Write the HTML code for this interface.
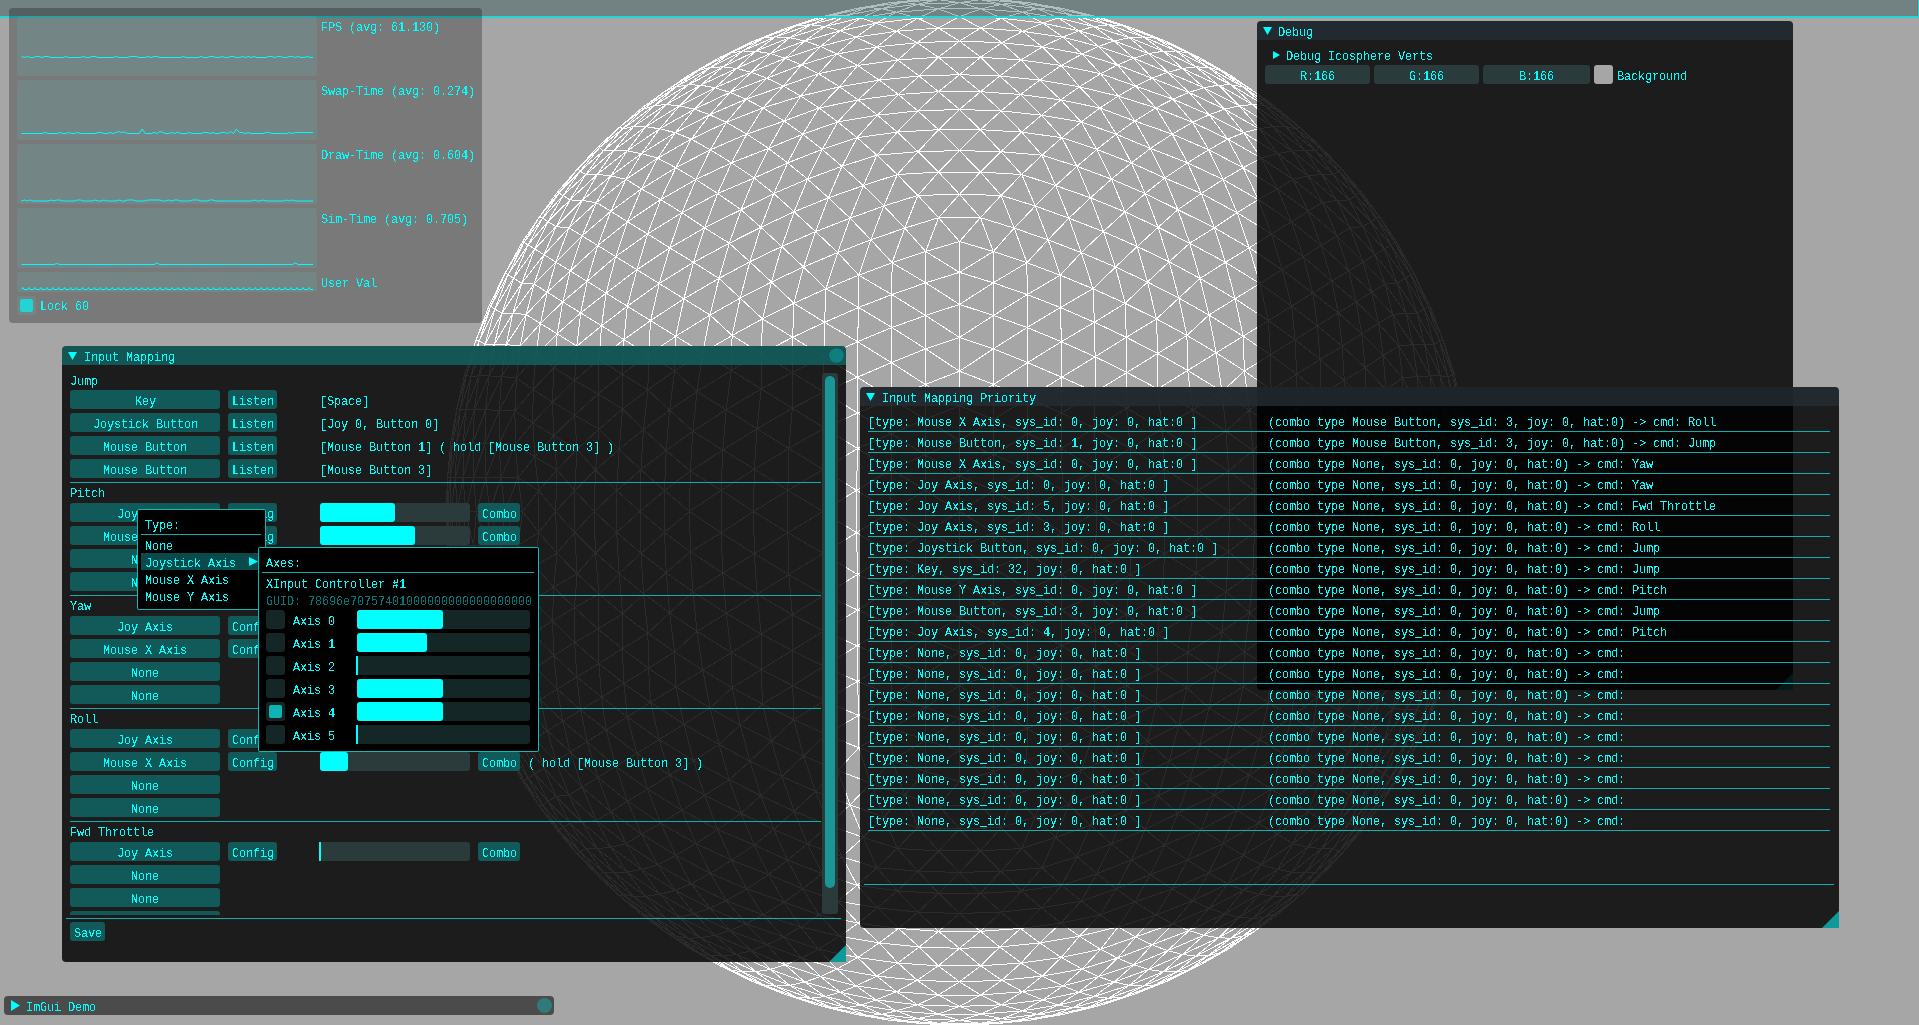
<!DOCTYPE html><html><head><meta charset="utf-8"><style>
html,body{margin:0;padding:0}body{width:1919px;height:1025px;overflow:hidden;background:#a6a6a6;position:relative;font-family:"Liberation Mono",monospace}
.t{position:absolute;filter:url(#th);font-size:12px;line-height:13px;letter-spacing:-0.2px;color:#00ffff;white-space:pre}
.r{position:absolute;display:block}
</style></head><body>
<svg width="0" height="0" style="position:absolute"><filter id="th"><feComponentTransfer><feFuncA type="discrete" tableValues="0 1"/></feComponentTransfer></filter></svg>
<svg class="r" style="left:0;top:0" width="1919" height="1025"><path d="M689.5 74.7L665.7 90.8M689.5 74.7L699.5 70M689.5 74.7L720.4 57.1M1229.5 74.7L1198.6 57.1M1229.5 74.7L1219.5 70M1229.5 74.7L1253.3 90.8M689.5 948.3L665.7 932.2M689.5 948.3L720.4 965.9M689.5 948.3L699.5 953M1229.5 948.3L1253.3 932.2M1229.5 948.3L1219.5 953M1229.5 948.3L1198.6 965.9M959.5 781.5L959.5 750.6M959.5 781.5L925.7 771.5M959.5 781.5L980.4 805.3M959.5 781.5L993.3 771.5M959.5 781.5L938.6 805.3M959.5 241.5L938.6 217.7M959.5 241.5L925.7 251.5M959.5 241.5L980.4 217.7M959.5 241.5L993.3 251.5M959.5 241.5L959.5 272.4M1396.3 511.5L1401 477.7M1396.3 511.5L1380.2 490.6M1396.3 511.5L1380.2 532.4M1396.3 511.5L1401 545.3M1396.3 511.5L1413.9 511.5M522.7 511.5L538.8 490.6M522.7 511.5L518 477.7M522.7 511.5L505.1 511.5M522.7 511.5L538.8 532.4M522.7 511.5L518 545.3M544.1 254.7L569 227.8M544.1 254.7L556 226.6M544.1 254.7L534.1 284.1M544.1 254.7L555.9 262.1M544.1 254.7L534.8 249M544.1 254.7L521.7 283.3M702.8 352.8L675.8 336.2M702.8 352.8L674.6 371M702.8 352.8L732.1 335.4M702.8 352.8L710.1 315M702.8 352.8L731.3 370.4M702.8 352.8L697 391.6M800.8 96.1L783.4 86.1M800.8 96.1L763 107.9M800.8 96.1L784.2 121M800.8 96.1L819 108M800.8 96.1L818.4 73.7M800.8 96.1L839.6 86.8M1118.2 96.1L1079.4 86.8M1118.2 96.1L1100 108M1118.2 96.1L1135.6 86.1M1118.2 96.1L1100.6 73.7M1118.2 96.1L1156 107.9M1118.2 96.1L1134.8 121M959.5 -2L924 -0.8M959.5 -2L938.3 -0.4M959.5 -2L980.7 -0.4M959.5 -2L995 -0.8M446 511.5L447.2 511.5M446 511.5L447.6 477.2M446 511.5L447.6 545.8M1216.2 352.8L1208.9 315M1216.2 352.8L1186.9 335.4M1216.2 352.8L1244.4 371M1216.2 352.8L1243.2 336.2M1216.2 352.8L1222 391.6M1216.2 352.8L1187.7 370.4M1374.9 254.7L1363 226.6M1374.9 254.7L1350 227.8M1374.9 254.7L1363.1 262.1M1374.9 254.7L1384.9 284.1M1374.9 254.7L1397.3 283.3M1374.9 254.7L1384.2 249M702.8 670.2L697 631.4M702.8 670.2L674.6 652M702.8 670.2L732.1 687.6M702.8 670.2L731.3 652.6M702.8 670.2L710.1 708M702.8 670.2L675.8 686.8M959.5 511.5L959.5 476M959.5 511.5L925.2 490.3M959.5 511.5L925.2 532.7M959.5 511.5L959.5 547M959.5 511.5L993.8 532.7M959.5 511.5L993.8 490.3M544.1 768.2L534.1 738.9M544.1 768.2L521.7 739.7M544.1 768.2L534.8 774M544.1 768.2L556 796.4M544.1 768.2L569 795.2M544.1 768.2L555.9 760.9M1374.9 768.2L1350 795.2M1374.9 768.2L1363 796.4M1374.9 768.2L1384.9 738.9M1374.9 768.2L1363.1 760.9M1374.9 768.2L1384.2 774M1374.9 768.2L1397.3 739.7M1216.2 670.2L1243.2 686.8M1216.2 670.2L1244.4 652M1216.2 670.2L1186.9 687.6M1216.2 670.2L1208.9 708M1216.2 670.2L1187.7 652.6M1216.2 670.2L1222 631.4M1118.2 926.9L1135.6 936.9M1118.2 926.9L1156 915.1M1118.2 926.9L1134.8 902M1118.2 926.9L1100 915M1118.2 926.9L1100.6 949.3M1118.2 926.9L1079.4 936.2M800.8 926.9L839.6 936.2M800.8 926.9L819 915M800.8 926.9L783.4 936.9M800.8 926.9L818.4 949.3M800.8 926.9L763 915.1M800.8 926.9L784.2 902M959.5 1025L995 1023.8M959.5 1025L980.7 1023.4M959.5 1025L938.3 1023.4M959.5 1025L924 1023.8M1473 511.5L1471.8 511.5M1473 511.5L1471.4 545.8M1473 511.5L1471.4 477.2M603.2 151L633.6 126.5M603.2 151L622.5 129.1M603.2 151L585.7 174.6M603.2 151L614.3 150M603.2 151L599.7 147.4M603.2 151L580.1 171.1M657.7 158.1L641.5 153.6M657.7 158.1L626 179.3M657.7 158.1L691.2 139.1M657.7 158.1L675.3 132.7M657.7 158.1L641.5 188.9M657.7 158.1L675.8 167.7M736.7 68.5L723.2 66.9M736.7 68.5L700.6 85.1M736.7 68.5L715 87.8M736.7 68.5L751.3 72.3M736.7 68.5L755.5 51.2M736.7 68.5L770.3 53.6M599 429L574.5 415.3M599 429L577.1 449.3M599 429L622.6 409.1M599 429L598 394M599 429L595.4 470.1M599 429L619.1 449.3M606.1 293.1L601.6 325.8M606.1 293.1L627.3 306.2M606.1 293.1L587.1 281.3M606.1 293.1L580.7 312.9M606.1 293.1L615.7 256.6M606.1 293.1L636.9 269.7M516.5 378L514.9 410.8M516.5 378L533.1 389.7M516.5 378L535.8 355.5M516.5 378L520.3 345.9M516.5 378L499.2 410.6M516.5 378L501.6 376.6M877 155.2L863.3 185.6M877 155.2L897.3 174.5M877 155.2L857.1 137.7M877 155.2L842 166.3M877 155.2L918.1 151.7M877 155.2L897.3 132.1M741.1 209.7L773.8 193.5M741.1 209.7L754.2 178M741.1 209.7L729.3 243.2M741.1 209.7L760.9 227.3M741.1 209.7L704.6 227.8M741.1 209.7L717.7 193.5M826 288.7L858.8 275.2M826 288.7L837.7 252.6M826 288.7L803.5 267M826 288.7L793.9 303.3M826 288.7L858.6 307.5M826 288.7L824.6 322.3M876.1 23.1L840.1 30.8M876.1 23.1L856.2 37.1M876.1 23.1L896.5 12.2M876.1 23.1L861 17.9M876.1 23.1L896.4 31.3M876.1 23.1L917.6 18.2M819.2 17.5L785.4 28.4M819.2 17.5L796.8 25.6M819.2 17.5L832.5 15.1M819.2 17.5L853.7 9M1042 155.2L1000.9 151.7M1042 155.2L1021.7 174.5M1042 155.2L1061.9 137.7M1042 155.2L1021.7 132.1M1042 155.2L1055.7 185.6M1042 155.2L1077 166.3M959.5 74.7L980.4 91.7M959.5 74.7L999.8 76M959.5 74.7L919.2 76M959.5 74.7L938.6 91.7M959.5 74.7L938.3 57.2M959.5 74.7L980.7 57.2M1099.8 17.5L1122.2 25.6M1099.8 17.5L1133.6 28.4M1099.8 17.5L1065.3 9M1099.8 17.5L1086.5 15.1M1042.9 23.1L1058 17.9M1042.9 23.1L1022.5 12.2M1042.9 23.1L1062.8 37.1M1042.9 23.1L1078.9 30.8M1042.9 23.1L1022.6 31.3M1042.9 23.1L1001.4 18.2M1182.3 68.5L1195.8 66.9M1182.3 68.5L1163.5 51.2M1182.3 68.5L1148.7 53.6M1182.3 68.5L1167.7 72.3M1182.3 68.5L1218.4 85.1M1182.3 68.5L1204 87.8M522.7 241.5L524 242.4M522.7 241.5L539.7 216.5M522.7 241.5L505.2 273.1M471.1 376.5L478.8 375.9M471.1 376.5L485.1 344.3M471.1 376.5L460.2 409.5M471.1 376.5L465.9 409.7M471.1 376.5L466.2 375.2M471.1 376.5L479.3 340.8M465.5 511.5L476.4 511.5M465.5 511.5L473.6 477.6M465.5 511.5L463.1 477.3M465.5 511.5L457 511.5M465.5 511.5L473.6 545.4M465.5 511.5L463.1 545.7M1261.3 158.1L1243.7 132.7M1261.3 158.1L1227.8 139.1M1261.3 158.1L1293 179.3M1261.3 158.1L1277.5 153.6M1261.3 158.1L1243.2 167.7M1261.3 158.1L1277.5 188.9M1315.8 151L1296.5 129.1M1315.8 151L1285.4 126.5M1315.8 151L1304.7 150M1315.8 151L1333.3 174.6M1315.8 151L1319.3 147.4M1315.8 151L1338.9 171.1M1093 288.7L1081.3 252.6M1093 288.7L1060.2 275.2M1093 288.7L1125.1 303.3M1093 288.7L1115.5 267M1093 288.7L1060.4 307.5M1093 288.7L1094.4 322.3M1177.9 209.7L1158.1 227.3M1177.9 209.7L1189.7 243.2M1177.9 209.7L1164.8 178M1177.9 209.7L1145.2 193.5M1177.9 209.7L1201.3 193.5M1177.9 209.7L1214.4 227.8M1402.5 378L1385.9 389.7M1402.5 378L1404.1 410.8M1402.5 378L1398.7 345.9M1402.5 378L1383.2 355.5M1402.5 378L1419.8 410.6M1402.5 378L1417.4 376.6M1312.9 293.1L1338.3 312.9M1312.9 293.1L1331.9 281.3M1312.9 293.1L1291.7 306.2M1312.9 293.1L1317.4 325.8M1312.9 293.1L1282.1 269.7M1312.9 293.1L1303.3 256.6M1320 429L1341.9 449.3M1320 429L1344.5 415.3M1320 429L1321 394M1320 429L1296.4 409.1M1320 429L1323.6 470.1M1320 429L1299.9 449.3M824.5 428.1L823.9 392.1M824.5 428.1L792.3 408.2M824.5 428.1L857.5 448.5M824.5 428.1L857.7 413M824.5 428.1L788.8 448.4M824.5 428.1L823.2 469.6M959.5 371.2L959.5 337.4M959.5 371.2L925.6 348.8M959.5 371.2L925.3 384.5M959.5 371.2L959.5 405.7M959.5 371.2L993.4 348.8M959.5 371.2L993.7 384.5M599 594L595.4 552.9M599 594L577.1 573.7M599 594L622.6 613.9M599 594L619.1 573.7M599 594L574.5 607.7M599 594L598 629M689.5 511.5L664.5 532.4M689.5 511.5L690.4 551.8M689.5 511.5L690.4 471.2M689.5 511.5L664.5 490.6M689.5 511.5L721.1 490.3M689.5 511.5L721.1 532.7M959.5 651.8L925.6 674.2M959.5 651.8L959.5 685.6M959.5 651.8L959.5 617.3M959.5 651.8L925.3 638.5M959.5 651.8L993.4 674.2M959.5 651.8L993.7 638.5M824.5 594.9L857.7 610M824.5 594.9L857.5 574.5M824.5 594.9L792.3 614.8M824.5 594.9L823.9 630.9M824.5 594.9L788.8 574.6M824.5 594.9L823.2 553.4M826 734.3L858.8 747.8M826 734.3L858.6 715.5M826 734.3L824.6 700.7M826 734.3L793.9 719.7M826 734.3L837.7 770.4M826 734.3L803.5 756M471.1 646.5L465.9 613.3M471.1 646.5L460.2 613.5M471.1 646.5L485.1 678.7M471.1 646.5L478.8 647.1M471.1 646.5L466.2 647.8M471.1 646.5L479.3 682.2M516.5 645L514.9 612.2M516.5 645L499.2 612.4M516.5 645L501.6 646.4M516.5 645L520.3 677.1M516.5 645L533.1 633.3M516.5 645L535.8 667.5M603.2 872L599.7 875.6M603.2 872L622.5 893.9M603.2 872L585.7 848.4M603.2 872L580.1 851.9M603.2 872L633.6 896.5M603.2 872L614.3 873M522.7 781.5L539.7 806.5M522.7 781.5L524 780.6M522.7 781.5L505.2 749.9M1315.8 872L1285.4 896.5M1315.8 872L1296.5 893.9M1315.8 872L1333.3 848.4M1315.8 872L1304.7 873M1315.8 872L1319.3 875.6M1315.8 872L1338.9 851.9M1261.3 864.9L1277.5 869.4M1261.3 864.9L1293 843.7M1261.3 864.9L1227.8 883.9M1261.3 864.9L1243.7 890.3M1261.3 864.9L1277.5 834.1M1261.3 864.9L1243.2 855.3M1182.3 954.5L1195.8 956.1M1182.3 954.5L1218.4 937.9M1182.3 954.5L1204 935.2M1182.3 954.5L1167.7 950.7M1182.3 954.5L1163.5 971.8M1182.3 954.5L1148.7 969.4M1320 594L1344.5 607.7M1320 594L1341.9 573.7M1320 594L1296.4 613.9M1320 594L1321 629M1320 594L1323.6 552.9M1320 594L1299.9 573.7M1312.9 729.9L1317.4 697.2M1312.9 729.9L1291.7 716.8M1312.9 729.9L1331.9 741.7M1312.9 729.9L1338.3 710.1M1312.9 729.9L1303.3 766.4M1312.9 729.9L1282.1 753.3M1402.5 645L1404.1 612.2M1402.5 645L1385.9 633.3M1402.5 645L1383.2 667.5M1402.5 645L1398.7 677.1M1402.5 645L1419.8 612.4M1402.5 645L1417.4 646.4M1042 867.8L1055.7 837.4M1042 867.8L1021.7 848.5M1042 867.8L1061.9 885.3M1042 867.8L1077 856.7M1042 867.8L1000.9 871.3M1042 867.8L1021.7 890.9M1177.9 813.3L1145.2 829.5M1177.9 813.3L1164.8 845M1177.9 813.3L1189.7 779.8M1177.9 813.3L1158.1 795.7M1177.9 813.3L1214.4 795.2M1177.9 813.3L1201.3 829.5M1093 734.3L1060.2 747.8M1093 734.3L1081.3 770.4M1093 734.3L1115.5 756M1093 734.3L1125.1 719.7M1093 734.3L1060.4 715.5M1093 734.3L1094.4 700.7M1042.9 999.9L1078.9 992.2M1042.9 999.9L1062.8 985.9M1042.9 999.9L1022.5 1010.8M1042.9 999.9L1058 1005.1M1042.9 999.9L1022.6 991.7M1042.9 999.9L1001.4 1004.8M1099.8 1005.5L1133.6 994.6M1099.8 1005.5L1122.2 997.4M1099.8 1005.5L1086.5 1007.9M1099.8 1005.5L1065.3 1014M877 867.8L918.1 871.3M877 867.8L897.3 848.5M877 867.8L857.1 885.3M877 867.8L897.3 890.9M877 867.8L863.3 837.4M877 867.8L842 856.7M959.5 948.3L938.6 931.3M959.5 948.3L919.2 947M959.5 948.3L999.8 947M959.5 948.3L980.4 931.3M959.5 948.3L980.7 965.8M959.5 948.3L938.3 965.8M819.2 1005.5L796.8 997.4M819.2 1005.5L785.4 994.6M819.2 1005.5L853.7 1014M819.2 1005.5L832.5 1007.9M876.1 999.9L861 1005.1M876.1 999.9L896.5 1010.8M876.1 999.9L856.2 985.9M876.1 999.9L840.1 992.2M876.1 999.9L896.4 991.7M876.1 999.9L917.6 1004.8M736.7 954.5L723.2 956.1M736.7 954.5L755.5 971.8M736.7 954.5L770.3 969.4M736.7 954.5L751.3 950.7M736.7 954.5L700.6 937.9M736.7 954.5L715 935.2M1396.3 781.5L1395 780.6M1396.3 781.5L1379.3 806.5M1396.3 781.5L1413.8 749.9M1447.9 646.5L1440.2 647.1M1447.9 646.5L1433.9 678.7M1447.9 646.5L1458.8 613.5M1447.9 646.5L1453.1 613.3M1447.9 646.5L1452.8 647.8M1447.9 646.5L1439.7 682.2M1453.5 511.5L1442.6 511.5M1453.5 511.5L1445.4 545.4M1453.5 511.5L1455.9 545.7M1453.5 511.5L1462 511.5M1453.5 511.5L1445.4 477.6M1453.5 511.5L1455.9 477.3M1094.5 594.9L1095.1 630.9M1094.5 594.9L1126.7 614.8M1094.5 594.9L1061.5 574.5M1094.5 594.9L1061.3 610M1094.5 594.9L1130.2 574.6M1094.5 594.9L1095.8 553.4M1229.5 511.5L1254.5 490.6M1229.5 511.5L1228.6 471.2M1229.5 511.5L1228.6 551.8M1229.5 511.5L1254.5 532.4M1229.5 511.5L1197.9 532.7M1229.5 511.5L1197.9 490.3M1094.5 428.1L1061.3 413M1094.5 428.1L1061.5 448.5M1094.5 428.1L1126.7 408.2M1094.5 428.1L1095.1 392.1M1094.5 428.1L1130.2 448.4M1094.5 428.1L1095.8 469.6M657.7 864.9L675.3 890.3M657.7 864.9L691.2 883.9M657.7 864.9L626 843.7M657.7 864.9L641.5 869.4M657.7 864.9L675.8 855.3M657.7 864.9L641.5 834.1M741.1 813.3L760.9 795.7M741.1 813.3L729.3 779.8M741.1 813.3L754.2 845M741.1 813.3L773.8 829.5M741.1 813.3L717.7 829.5M741.1 813.3L704.6 795.2M606.1 729.9L580.7 710.1M606.1 729.9L587.1 741.7M606.1 729.9L627.3 716.8M606.1 729.9L601.6 697.2M606.1 729.9L636.9 753.3M606.1 729.9L615.7 766.4M1447.9 376.5L1453.1 409.7M1447.9 376.5L1458.8 409.5M1447.9 376.5L1433.9 344.3M1447.9 376.5L1440.2 375.9M1447.9 376.5L1452.8 375.2M1447.9 376.5L1439.7 340.8M1396.3 241.5L1379.3 216.5M1396.3 241.5L1395 242.4M1396.3 241.5L1413.8 273.1M643.4 109L665.7 90.8M643.4 109L676.1 86.8M643.4 109L654 105.7M643.4 109L622.5 129.1M643.4 109L642.3 107.7M643.4 109L620.1 126.7M666.2 104.5L633.6 126.5M666.2 104.5L654 105.7M666.2 104.5L687.8 84.9M666.2 104.5L700.6 85.1M666.2 104.5L645.8 126.7M666.2 104.5L679.6 105.8M710.7 67.4L676.1 86.8M710.7 67.4L699.5 70M710.7 67.4L723.2 66.9M710.7 67.4L687.8 84.9M710.7 67.4L730.8 53M710.7 67.4L742.6 51M596.4 202.6L569 227.8M596.4 202.6L582.2 200.5M596.4 202.6L610.9 175.9M596.4 202.6L626 179.3M596.4 202.6L582.1 235.9M596.4 202.6L610.8 211.2M627.1 150.9L641.5 153.6M627.1 150.9L610.9 175.9M627.1 150.9L597.4 174.3M627.1 150.9L614.3 150M627.1 150.9L645.8 126.7M627.1 150.9L659.8 128.8M569.9 199.9L582.2 200.5M569.9 199.9L556 226.6M569.9 199.9L585.7 174.6M569.9 199.9L597.4 174.3M569.9 199.9L547.9 221.6M569.9 199.9L563.2 195.5M766.9 78.2L783.4 86.1M766.9 78.2L746.1 99.2M766.9 78.2L730 92.4M766.9 78.2L751.3 72.3M766.9 78.2L801.5 64.9M766.9 78.2L785.3 58.2M694.5 109.2L715 87.8M694.5 109.2L730 92.4M694.5 109.2L709.8 114.8M694.5 109.2L675.3 132.7M694.5 109.2L659.8 128.8M694.5 109.2L679.6 105.8M726.4 122.3L746.1 99.2M726.4 122.3L763 107.9M726.4 122.3L691.2 139.1M726.4 122.3L709.8 114.8M726.4 122.3L746.8 134.1M726.4 122.3L710.3 149.8M557 469.9L538.8 490.6M557 469.9L534.8 456.8M557 469.9L553.7 435.8M557 469.9L577.1 449.3M557 469.9L555.7 511.5M557 469.9L574.7 490.6M552.5 402.1L574.5 415.3M552.5 402.1L553.7 435.8M552.5 402.1L532.9 422.9M552.5 402.1L533.1 389.7M552.5 402.1L574.7 380.5M552.5 402.1L553.8 367.6M515.4 444.1L534.8 456.8M515.4 444.1L518 477.7M515.4 444.1L514.9 410.8M515.4 444.1L532.9 422.9M515.4 444.1L501 477.7M515.4 444.1L499 443.8M650.6 320.6L675.8 336.2M650.6 320.6L648.5 354.8M650.6 320.6L623.9 339.6M650.6 320.6L627.3 306.2M650.6 320.6L683.9 298.8M650.6 320.6L659.2 283.5M598.9 359.5L601.6 325.8M598.9 359.5L623.9 339.6M598.9 359.5L622.3 374.2M598.9 359.5L598 394M598.9 359.5L574.7 380.5M598.9 359.5L576.8 346.1M647.9 389.8L648.5 354.8M647.9 389.8L674.6 371M647.9 389.8L622.6 409.1M647.9 389.8L622.3 374.2M647.9 389.8L669.6 410.2M647.9 389.8L643.5 429.5M526.2 314.5L534.1 284.1M526.2 314.5L547.2 292.2M526.2 314.5L540.4 323.5M526.2 314.5L520.3 345.9M526.2 314.5L512.9 313.3M526.2 314.5L506.2 344.7M557.2 333.8L535.8 355.5M557.2 333.8L540.4 323.5M557.2 333.8L562.8 301.8M557.2 333.8L580.7 312.9M557.2 333.8L576.8 346.1M557.2 333.8L553.8 367.6M570.3 271L547.2 292.2M570.3 271L555.9 262.1M570.3 271L587.1 281.3M570.3 271L562.8 301.8M570.3 271L582.1 235.9M570.3 271L597.8 245.5M917.9 195.4L938.6 217.7M917.9 195.4L904.8 228.1M917.9 195.4L883.8 206M917.9 195.4L897.3 174.5M917.9 195.4L959.5 194.3M917.9 195.4L938.6 172.1M850.1 218.2L863.3 185.6M850.1 218.2L883.8 206M850.1 218.2L870.9 239.8M850.1 218.2L837.7 252.6M850.1 218.2L828.5 197.8M850.1 218.2L815.6 231.6M892.1 262.7L904.8 228.1M892.1 262.7L925.7 251.5M892.1 262.7L858.8 275.2M892.1 262.7L870.9 239.8M892.1 262.7L925.7 282.8M892.1 262.7L891.8 294.6M768.6 148.4L784.2 121M768.6 148.4L802.8 134.2M768.6 148.4L787.6 162.9M768.6 148.4L754.2 178M768.6 148.4L746.8 134.1M768.6 148.4L731.5 162.8M807.5 179.1L773.8 193.5M807.5 179.1L787.6 162.9M807.5 179.1L822.2 149.4M807.5 179.1L842 166.3M807.5 179.1L828.5 197.8M807.5 179.1L794.1 211.8M837.8 121.9L802.8 134.2M837.8 121.9L819 108M837.8 121.9L857.1 137.7M837.8 121.9L822.2 149.4M837.8 121.9L858.2 99.9M837.8 121.9L877.5 115.2M762.5 318.9L732.1 335.4M762.5 318.9L740.2 298.1M762.5 318.9L771.5 282M762.5 318.9L793.9 303.3M762.5 318.9L761.3 353.5M762.5 318.9L792.7 337.3M781.8 246.5L803.5 267M781.8 246.5L771.5 282M781.8 246.5L749.8 261.8M781.8 246.5L760.9 227.3M781.8 246.5L794.1 211.8M781.8 246.5L815.6 231.6M719 278.4L740.2 298.1M719 278.4L710.1 315M719 278.4L729.3 243.2M719 278.4L749.8 261.8M719 278.4L683.9 298.8M719 278.4L693.5 262.3M627.5 221.8L615.7 256.6M627.5 221.8L597.8 245.5M627.5 221.8L610.8 211.2M627.5 221.8L641.5 188.9M627.5 221.8L647.6 233.9M627.5 221.8L660.7 199.6M669.8 247.9L704.6 227.8M669.8 247.9L693.5 262.3M669.8 247.9L659.2 283.5M669.8 247.9L636.9 269.7M669.8 247.9L647.6 233.9M669.8 247.9L681.9 212.7M695.9 179.5L675.8 167.7M695.9 179.5L710.3 149.8M695.9 179.5L731.5 162.8M695.9 179.5L717.7 193.5M695.9 179.5L681.9 212.7M695.9 179.5L660.7 199.6M775.5 36.9L755.5 51.2M775.5 36.9L742.6 51M775.5 36.9L763.5 38.1M775.5 36.9L796.8 25.6M775.5 36.9L789.7 37.7M775.5 36.9L810.6 24.8M752.4 41.6L730.8 53M752.4 41.6L720.4 57.1M752.4 41.6L785.4 28.4M752.4 41.6L763.5 38.1M836.9 54L818.4 73.7M836.9 54L801.5 64.9M836.9 54L820.5 46.4M836.9 54L856.2 37.1M836.9 54L857.7 65.5M836.9 54L876.8 46.9M804.8 41L840.1 30.8M804.8 41L820.5 46.4M804.8 41L785.3 58.2M804.8 41L770.3 53.6M804.8 41L789.7 37.7M804.8 41L825.2 26.5M888.7 2.9L924 -0.8M888.7 2.9L902.8 2.3M888.7 2.9L867.3 7.5M888.7 2.9L853.7 9M846.5 15.3L832.5 15.1M846.5 15.3L867.3 7.5M846.5 15.3L881.7 8.6M846.5 15.3L861 17.9M846.5 15.3L825.2 26.5M846.5 15.3L810.6 24.8M917.3 4.3L902.8 2.3M917.3 4.3L938.3 -0.4M917.3 4.3L896.5 12.2M917.3 4.3L881.7 8.6M917.3 4.3L959.5 2.6M917.3 4.3L938.3 8.9M1001.1 195.4L980.4 217.7M1001.1 195.4L959.5 194.3M1001.1 195.4L980.4 172.1M1001.1 195.4L1021.7 174.5M1001.1 195.4L1014.2 228.1M1001.1 195.4L1035.2 206M959.5 150.6L1000.9 151.7M959.5 150.6L980.4 172.1M959.5 150.6L938.6 172.1M959.5 150.6L918.1 151.7M959.5 150.6L980.4 129.7M959.5 150.6L938.6 129.7M1039.8 80.1L1079.4 86.8M1039.8 80.1L1060.8 99.9M1039.8 80.1L1020.6 94.5M1039.8 80.1L999.8 76M1039.8 80.1L1061.3 65.5M1039.8 80.1L1021 60M1001.2 110.9L980.4 91.7M1001.2 110.9L1020.6 94.5M1001.2 110.9L1041.5 115.2M1001.2 110.9L1021.7 132.1M1001.2 110.9L980.4 129.7M1001.2 110.9L959.5 109.5M1081.2 121.9L1060.8 99.9M1081.2 121.9L1100 108M1081.2 121.9L1061.9 137.7M1081.2 121.9L1041.5 115.2M1081.2 121.9L1116.2 134.2M1081.2 121.9L1096.8 149.4M917.8 110.9L897.3 132.1M917.8 110.9L877.5 115.2M917.8 110.9L898.4 94.5M917.8 110.9L938.6 91.7M917.8 110.9L959.5 109.5M917.8 110.9L938.6 129.7M879.2 80.1L858.2 99.9M879.2 80.1L839.6 86.8M879.2 80.1L919.2 76M879.2 80.1L898.4 94.5M879.2 80.1L857.7 65.5M879.2 80.1L898 60M1166.6 41.6L1198.6 57.1M1166.6 41.6L1188.2 53M1166.6 41.6L1155.5 38.1M1166.6 41.6L1133.6 28.4M1143.5 36.9L1122.2 25.6M1143.5 36.9L1155.5 38.1M1143.5 36.9L1176.4 51M1143.5 36.9L1163.5 51.2M1143.5 36.9L1108.4 24.8M1143.5 36.9L1129.3 37.7M1208.3 67.4L1188.2 53M1208.3 67.4L1219.5 70M1208.3 67.4L1195.8 66.9M1208.3 67.4L1176.4 51M1208.3 67.4L1242.9 86.8M1208.3 67.4L1231.2 84.9M1001.7 4.3L980.7 -0.4M1001.7 4.3L1016.2 2.3M1001.7 4.3L1037.3 8.6M1001.7 4.3L1022.5 12.2M1001.7 4.3L959.5 2.6M1001.7 4.3L980.7 8.9M1072.5 15.3L1058 17.9M1072.5 15.3L1037.3 8.6M1072.5 15.3L1051.7 7.5M1072.5 15.3L1086.5 15.1M1072.5 15.3L1108.4 24.8M1072.5 15.3L1093.8 26.5M1030.3 2.9L1016.2 2.3M1030.3 2.9L995 -0.8M1030.3 2.9L1065.3 9M1030.3 2.9L1051.7 7.5M1152.1 78.2L1135.6 86.1M1152.1 78.2L1117.5 64.9M1152.1 78.2L1133.7 58.2M1152.1 78.2L1167.7 72.3M1152.1 78.2L1172.9 99.2M1152.1 78.2L1189 92.4M1114.2 41L1148.7 53.6M1114.2 41L1133.7 58.2M1114.2 41L1098.5 46.4M1114.2 41L1078.9 30.8M1114.2 41L1093.8 26.5M1114.2 41L1129.3 37.7M1082.1 54L1117.5 64.9M1082.1 54L1100.6 73.7M1082.1 54L1062.8 37.1M1082.1 54L1098.5 46.4M1082.1 54L1061.3 65.5M1082.1 54L1042.2 46.9M917.2 42.7L938.3 57.2M917.2 42.7L898 60M917.2 42.7L876.8 46.9M917.2 42.7L896.4 31.3M917.2 42.7L959.5 41.1M917.2 42.7L938.3 28M1001.8 42.7L1022.6 31.3M1001.8 42.7L1042.2 46.9M1001.8 42.7L1021 60M1001.8 42.7L980.7 57.2M1001.8 42.7L959.5 41.1M1001.8 42.7L980.7 28M959.5 16.6L917.6 18.2M959.5 16.6L938.3 8.9M959.5 16.6L980.7 8.9M959.5 16.6L1001.4 18.2M959.5 16.6L980.7 28M959.5 16.6L938.3 28M598.6 146.3L620.1 126.7M598.6 146.3L599.7 147.4M598.6 146.3L577.7 168.7M558.9 193L580.1 171.1M558.9 193L563.2 195.5M558.9 193L542.5 218.2M558.9 193L539.7 216.5M558.9 193L557.5 192M558.9 193L577.7 168.7M528.1 244.9L547.9 221.6M528.1 244.9L534.8 249M528.1 244.9L524 242.4M528.1 244.9L542.5 218.2M528.1 244.9L513.5 278.2M528.1 244.9L508 274.8M484.9 443.9L499.2 410.6M484.9 443.9L499 443.8M484.9 443.9L486.1 477.6M484.9 443.9L473.6 477.6M484.9 443.9L485.7 409.6M484.9 443.9L472.8 443.4M489.6 511.5L501 477.7M489.6 511.5L505.1 511.5M489.6 511.5L476.4 511.5M489.6 511.5L486.1 477.6M489.6 511.5L501 545.3M489.6 511.5L486.1 545.4M502 313.2L521.7 283.3M502 313.2L512.9 313.3M502 313.2L494.4 344.1M502 313.2L485.1 344.3M502 313.2L513.5 278.2M502 313.2L494.9 309.1M489 375.9L478.8 375.9M489 375.9L494.4 344.1M489 375.9L506.2 344.7M489 375.9L501.6 376.6M489 375.9L485.7 409.6M489 375.9L474.5 409.3M450.9 511.5L447.2 511.5M450.9 511.5L450.3 477.2M450.9 511.5L455.5 477.3M450.9 511.5L457 511.5M450.9 511.5L450.3 545.8M450.9 511.5L455.5 545.7M463.3 443.3L463.1 477.3M463.3 443.3L455.5 477.3M463.3 443.3L456.6 443.1M463.3 443.3L465.9 409.7M463.3 443.3L474.5 409.3M463.3 443.3L472.8 443.4M452.3 443.2L450.3 477.2M452.3 443.2L447.6 477.2M452.3 443.2L460.2 409.5M452.3 443.2L456.6 443.1M452.3 443.2L450.6 442.9M452.3 443.2L456.9 408.6M464.6 374.7L466.2 375.2M464.6 374.7L456.9 408.6M464.6 374.7L476 339.9M490.7 306.3L505.2 273.1M490.7 306.3L508 274.8M490.7 306.3L494.9 309.1M490.7 306.3L479.3 340.8M490.7 306.3L476 339.9M490.7 306.3L489.1 305.6M1252.8 104.5L1218.4 85.1M1252.8 104.5L1231.2 84.9M1252.8 104.5L1265 105.7M1252.8 104.5L1285.4 126.5M1252.8 104.5L1239.4 105.8M1252.8 104.5L1273.2 126.7M1275.6 109L1242.9 86.8M1275.6 109L1253.3 90.8M1275.6 109L1296.5 129.1M1275.6 109L1265 105.7M1275.6 109L1276.7 107.7M1275.6 109L1298.9 126.7M1192.6 122.3L1156 107.9M1192.6 122.3L1172.9 99.2M1192.6 122.3L1209.2 114.8M1192.6 122.3L1227.8 139.1M1192.6 122.3L1172.2 134.1M1192.6 122.3L1208.7 149.8M1224.5 109.2L1243.7 132.7M1224.5 109.2L1209.2 114.8M1224.5 109.2L1189 92.4M1224.5 109.2L1204 87.8M1224.5 109.2L1239.4 105.8M1224.5 109.2L1259.2 128.8M1349.1 199.9L1363 226.6M1349.1 199.9L1336.8 200.5M1349.1 199.9L1321.6 174.3M1349.1 199.9L1333.3 174.6M1349.1 199.9L1371.1 221.6M1349.1 199.9L1355.8 195.5M1291.9 150.9L1304.7 150M1291.9 150.9L1321.6 174.3M1291.9 150.9L1308.1 175.9M1291.9 150.9L1277.5 153.6M1291.9 150.9L1259.2 128.8M1291.9 150.9L1273.2 126.7M1322.6 202.6L1336.8 200.5M1322.6 202.6L1350 227.8M1322.6 202.6L1293 179.3M1322.6 202.6L1308.1 175.9M1322.6 202.6L1336.9 235.9M1322.6 202.6L1308.2 211.2M1026.9 262.7L993.3 251.5M1026.9 262.7L1014.2 228.1M1026.9 262.7L1048.1 239.8M1026.9 262.7L1060.2 275.2M1026.9 262.7L993.3 282.8M1026.9 262.7L1027.2 294.6M1068.9 218.2L1081.3 252.6M1068.9 218.2L1048.1 239.8M1068.9 218.2L1035.2 206M1068.9 218.2L1055.7 185.6M1068.9 218.2L1103.4 231.6M1068.9 218.2L1090.5 197.8M1200 278.4L1208.9 315M1200 278.4L1178.8 298.1M1200 278.4L1169.2 261.8M1200 278.4L1189.7 243.2M1200 278.4L1235.1 298.8M1200 278.4L1225.5 262.3M1137.2 246.5L1158.1 227.3M1137.2 246.5L1169.2 261.8M1137.2 246.5L1147.5 282M1137.2 246.5L1115.5 267M1137.2 246.5L1103.4 231.6M1137.2 246.5L1124.9 211.8M1156.5 318.9L1178.8 298.1M1156.5 318.9L1186.9 335.4M1156.5 318.9L1125.1 303.3M1156.5 318.9L1147.5 282M1156.5 318.9L1157.7 353.5M1156.5 318.9L1126.3 337.3M1111.5 179.1L1077 166.3M1111.5 179.1L1096.8 149.4M1111.5 179.1L1131.4 162.9M1111.5 179.1L1145.2 193.5M1111.5 179.1L1124.9 211.8M1111.5 179.1L1090.5 197.8M1150.4 148.4L1116.2 134.2M1150.4 148.4L1134.8 121M1150.4 148.4L1164.8 178M1150.4 148.4L1131.4 162.9M1150.4 148.4L1172.2 134.1M1150.4 148.4L1187.5 162.8M1403.6 444.1L1401 477.7M1403.6 444.1L1384.2 456.8M1403.6 444.1L1386.1 422.9M1403.6 444.1L1404.1 410.8M1403.6 444.1L1418 477.7M1403.6 444.1L1420 443.8M1366.5 402.1L1385.9 389.7M1366.5 402.1L1386.1 422.9M1366.5 402.1L1365.3 435.8M1366.5 402.1L1344.5 415.3M1366.5 402.1L1365.2 367.6M1366.5 402.1L1344.3 380.5M1362 469.9L1384.2 456.8M1362 469.9L1380.2 490.6M1362 469.9L1341.9 449.3M1362 469.9L1365.3 435.8M1362 469.9L1363.3 511.5M1362 469.9L1344.3 490.6M1348.7 271L1363.1 262.1M1348.7 271L1371.8 292.2M1348.7 271L1356.2 301.8M1348.7 271L1331.9 281.3M1348.7 271L1336.9 235.9M1348.7 271L1321.2 245.5M1361.8 333.8L1338.3 312.9M1361.8 333.8L1356.2 301.8M1361.8 333.8L1378.6 323.5M1361.8 333.8L1383.2 355.5M1361.8 333.8L1365.2 367.6M1361.8 333.8L1342.2 346.1M1392.8 314.5L1371.8 292.2M1392.8 314.5L1384.9 284.1M1392.8 314.5L1398.7 345.9M1392.8 314.5L1378.6 323.5M1392.8 314.5L1406.1 313.3M1392.8 314.5L1412.8 344.7M1271.1 389.8L1244.4 371M1271.1 389.8L1270.5 354.8M1271.1 389.8L1296.7 374.2M1271.1 389.8L1296.4 409.1M1271.1 389.8L1249.4 410.2M1271.1 389.8L1275.5 429.5M1320.1 359.5L1321 394M1320.1 359.5L1296.7 374.2M1320.1 359.5L1295.1 339.6M1320.1 359.5L1317.4 325.8M1320.1 359.5L1342.2 346.1M1320.1 359.5L1344.3 380.5M1268.4 320.6L1270.5 354.8M1268.4 320.6L1243.2 336.2M1268.4 320.6L1291.7 306.2M1268.4 320.6L1295.1 339.6M1268.4 320.6L1235.1 298.8M1268.4 320.6L1259.8 283.5M1223.1 179.5L1201.3 193.5M1223.1 179.5L1187.5 162.8M1223.1 179.5L1208.7 149.8M1223.1 179.5L1243.2 167.7M1223.1 179.5L1237.1 212.7M1223.1 179.5L1258.3 199.6M1249.2 247.9L1282.1 269.7M1249.2 247.9L1259.8 283.5M1249.2 247.9L1225.5 262.3M1249.2 247.9L1214.4 227.8M1249.2 247.9L1237.1 212.7M1249.2 247.9L1271.4 233.9M1291.5 221.8L1277.5 188.9M1291.5 221.8L1308.2 211.2M1291.5 221.8L1321.2 245.5M1291.5 221.8L1303.3 256.6M1291.5 221.8L1271.4 233.9M1291.5 221.8L1258.3 199.6M891.9 327.5L858.6 307.5M891.9 327.5L891.8 294.6M891.9 327.5L925.6 315.5M891.9 327.5L925.6 348.8M891.9 327.5L857.6 341.7M891.9 327.5L891.4 362.6M959.5 304.4L925.7 282.8M959.5 304.4L959.5 272.4M959.5 304.4L959.5 337.4M959.5 304.4L925.6 315.5M959.5 304.4L993.3 282.8M959.5 304.4L993.4 315.5M761.2 388.9L731.3 370.4M761.2 388.9L761.3 353.5M761.2 388.9L792.1 372.5M761.2 388.9L792.3 408.2M761.2 388.9L726.2 409.7M761.2 388.9L757.1 428.8M823.9 356.8L823.9 392.1M823.9 356.8L792.1 372.5M823.9 356.8L792.7 337.3M823.9 356.8L824.6 322.3M823.9 356.8L857.6 341.7M823.9 356.8L857.3 377.2M959.5 440.7L959.5 476M959.5 440.7L925.2 454.8M959.5 440.7L925.3 419.3M959.5 440.7L959.5 405.7M959.5 440.7L993.8 454.8M959.5 440.7L993.7 419.3M891.3 398.5L925.3 384.5M891.3 398.5L925.3 419.3M891.3 398.5L891.1 433.7M891.3 398.5L857.7 413M891.3 398.5L857.3 377.2M891.3 398.5L891.4 362.6M891.2 469.3L925.2 454.8M891.2 469.3L925.2 490.3M891.2 469.3L857.5 448.5M891.2 469.3L891.1 433.7M891.2 469.3L890.9 511.5M891.2 469.3L856.6 490.3M557 553.1L538.8 532.4M557 553.1L555.7 511.5M557 553.1L574.7 532.4M557 553.1L577.1 573.7M557 553.1L534.8 566.2M557 553.1L553.7 587.2M594.3 511.5L595.4 552.9M594.3 511.5L574.7 532.4M594.3 511.5L574.7 490.6M594.3 511.5L595.4 470.1M594.3 511.5L616.7 532.4M594.3 511.5L616.7 490.6M692.9 591.8L697 631.4M692.9 591.8L669.6 612.8M692.9 591.8L666.2 572.6M692.9 591.8L690.4 551.8M692.9 591.8L726.2 613.3M692.9 591.8L722.8 573M641 553.2L664.5 532.4M641 553.2L666.2 572.6M641 553.2L643.5 593.5M641 553.2L619.1 573.7M641 553.2L616.7 532.4M641 553.2L640 511.5M647.9 633.2L669.6 612.8M647.9 633.2L674.6 652M647.9 633.2L622.6 613.9M647.9 633.2L643.5 593.5M647.9 633.2L648.5 668.2M647.9 633.2L622.3 648.8M641 469.8L619.1 449.3M641 469.8L643.5 429.5M641 469.8L666.2 450.4M641 469.8L664.5 490.6M641 469.8L640 511.5M641 469.8L616.7 490.6M692.9 431.2L669.6 410.2M692.9 431.2L697 391.6M692.9 431.2L690.4 471.2M692.9 431.2L666.2 450.4M692.9 431.2L726.2 409.7M692.9 431.2L722.8 450M959.5 718.6L959.5 750.6M959.5 718.6L925.7 740.2M959.5 718.6L925.6 707.5M959.5 718.6L959.5 685.6M959.5 718.6L993.3 740.2M959.5 718.6L993.4 707.5M891.9 695.5L925.6 674.2M891.9 695.5L925.6 707.5M891.9 695.5L891.8 728.4M891.9 695.5L858.6 715.5M891.9 695.5L891.4 660.4M891.9 695.5L857.6 681.3M892.1 760.3L925.7 740.2M892.1 760.3L925.7 771.5M892.1 760.3L858.8 747.8M892.1 760.3L891.8 728.4M892.1 760.3L904.8 794.9M892.1 760.3L870.9 783.2M891.2 553.7L925.2 532.7M891.2 553.7L925.2 568.2M891.2 553.7L891.1 589.3M891.2 553.7L857.5 574.5M891.2 553.7L890.9 511.5M891.2 553.7L856.6 532.7M891.3 624.5L857.7 610M891.3 624.5L891.1 589.3M891.3 624.5L925.3 603.7M891.3 624.5L925.3 638.5M891.3 624.5L891.4 660.4M891.3 624.5L857.3 645.8M959.5 582.3L925.2 568.2M959.5 582.3L959.5 547M959.5 582.3L959.5 617.3M959.5 582.3L925.3 603.7M959.5 582.3L993.8 568.2M959.5 582.3L993.7 603.7M762.5 704.1L732.1 687.6M762.5 704.1L761.3 669.5M762.5 704.1L792.7 685.7M762.5 704.1L793.9 719.7M762.5 704.1L740.2 724.9M762.5 704.1L771.5 741M823.9 666.2L824.6 700.7M823.9 666.2L792.7 685.7M823.9 666.2L792.1 650.5M823.9 666.2L823.9 630.9M823.9 666.2L857.3 645.8M823.9 666.2L857.6 681.3M761.2 634.1L761.3 669.5M761.2 634.1L731.3 652.6M761.2 634.1L792.3 614.8M761.2 634.1L792.1 650.5M761.2 634.1L726.2 613.3M761.2 634.1L757.1 594.2M754.3 469.2L721.1 490.3M754.3 469.2L722.8 450M754.3 469.2L757.1 428.8M754.3 469.2L788.8 448.4M754.3 469.2L753.6 511.5M754.3 469.2L787.9 490.3M754.3 553.8L788.8 574.6M754.3 553.8L757.1 594.2M754.3 553.8L722.8 573M754.3 553.8L721.1 532.7M754.3 553.8L753.6 511.5M754.3 553.8L787.9 532.7M822.7 511.5L823.2 469.6M822.7 511.5L856.6 490.3M822.7 511.5L856.6 532.7M822.7 511.5L823.2 553.4M822.7 511.5L787.9 532.7M822.7 511.5L787.9 490.3M484.9 579.1L473.6 545.4M484.9 579.1L486.1 545.4M484.9 579.1L499 579.2M484.9 579.1L499.2 612.4M484.9 579.1L472.8 579.6M484.9 579.1L485.7 613.4M515.4 578.9L501 545.3M515.4 578.9L518 545.3M515.4 578.9L514.9 612.2M515.4 578.9L499 579.2M515.4 578.9L534.8 566.2M515.4 578.9L532.9 600.1M452.3 579.8L447.6 545.8M452.3 579.8L450.3 545.8M452.3 579.8L456.6 579.9M452.3 579.8L460.2 613.5M452.3 579.8L450.6 580.1M452.3 579.8L456.9 614.4M463.3 579.7L465.9 613.3M463.3 579.7L456.6 579.9M463.3 579.7L455.5 545.7M463.3 579.7L463.1 545.7M463.3 579.7L472.8 579.6M463.3 579.7L474.5 613.7M526.2 708.5L534.1 738.9M526.2 708.5L512.9 709.7M526.2 708.5L506.2 678.3M526.2 708.5L520.3 677.1M526.2 708.5L547.2 730.8M526.2 708.5L540.4 699.5M489 647.1L501.6 646.4M489 647.1L506.2 678.3M489 647.1L494.4 678.9M489 647.1L478.8 647.1M489 647.1L474.5 613.7M489 647.1L485.7 613.4M502 709.8L512.9 709.7M502 709.8L521.7 739.7M502 709.8L485.1 678.7M502 709.8L494.4 678.9M502 709.8L513.5 744.8M502 709.8L494.9 713.9M643.4 914L665.7 932.2M643.4 914L642.3 915.3M643.4 914L620.1 896.3M643.4 914L622.5 893.9M643.4 914L676.1 936.2M643.4 914L654 917.3M598.6 876.7L599.7 875.6M598.6 876.7L620.1 896.3M598.6 876.7L577.7 854.3M528.1 778.1L534.8 774M528.1 778.1L547.9 801.4M528.1 778.1L542.5 804.8M528.1 778.1L524 780.6M528.1 778.1L513.5 744.8M528.1 778.1L508 748.2M558.9 830L539.7 806.5M558.9 830L542.5 804.8M558.9 830L563.2 827.5M558.9 830L580.1 851.9M558.9 830L577.7 854.3M558.9 830L557.5 831M569.9 823.1L547.9 801.4M569.9 823.1L556 796.4M569.9 823.1L585.7 848.4M569.9 823.1L563.2 827.5M569.9 823.1L582.2 822.5M569.9 823.1L597.4 848.7M464.6 648.3L456.9 614.4M464.6 648.3L466.2 647.8M464.6 648.3L476 683.1M490.7 716.7L479.3 682.2M490.7 716.7L494.9 713.9M490.7 716.7L508 748.2M490.7 716.7L505.2 749.9M490.7 716.7L489.1 717.4M490.7 716.7L476 683.1M1275.6 914L1253.3 932.2M1275.6 914L1242.9 936.2M1275.6 914L1265 917.3M1275.6 914L1296.5 893.9M1275.6 914L1276.7 915.3M1275.6 914L1298.9 896.3M1252.8 918.5L1285.4 896.5M1252.8 918.5L1265 917.3M1252.8 918.5L1231.2 938.1M1252.8 918.5L1218.4 937.9M1252.8 918.5L1273.2 896.3M1252.8 918.5L1239.4 917.2M1208.3 955.6L1242.9 936.2M1208.3 955.6L1219.5 953M1208.3 955.6L1195.8 956.1M1208.3 955.6L1231.2 938.1M1208.3 955.6L1188.2 970M1208.3 955.6L1176.4 972M1322.6 820.4L1350 795.2M1322.6 820.4L1336.8 822.5M1322.6 820.4L1308.1 847.1M1322.6 820.4L1293 843.7M1322.6 820.4L1336.9 787.1M1322.6 820.4L1308.2 811.8M1291.9 872.1L1277.5 869.4M1291.9 872.1L1308.1 847.1M1291.9 872.1L1321.6 848.7M1291.9 872.1L1304.7 873M1291.9 872.1L1273.2 896.3M1291.9 872.1L1259.2 894.2M1349.1 823.1L1336.8 822.5M1349.1 823.1L1363 796.4M1349.1 823.1L1333.3 848.4M1349.1 823.1L1321.6 848.7M1349.1 823.1L1371.1 801.4M1349.1 823.1L1355.8 827.5M1152.1 944.8L1135.6 936.9M1152.1 944.8L1172.9 923.8M1152.1 944.8L1189 930.6M1152.1 944.8L1167.7 950.7M1152.1 944.8L1117.5 958.1M1152.1 944.8L1133.7 964.8M1224.5 913.8L1204 935.2M1224.5 913.8L1189 930.6M1224.5 913.8L1209.2 908.2M1224.5 913.8L1243.7 890.3M1224.5 913.8L1259.2 894.2M1224.5 913.8L1239.4 917.2M1192.6 900.7L1172.9 923.8M1192.6 900.7L1156 915.1M1192.6 900.7L1227.8 883.9M1192.6 900.7L1209.2 908.2M1192.6 900.7L1172.2 888.9M1192.6 900.7L1208.7 873.2M1362 553.1L1380.2 532.4M1362 553.1L1384.2 566.2M1362 553.1L1365.3 587.2M1362 553.1L1341.9 573.7M1362 553.1L1363.3 511.5M1362 553.1L1344.3 532.4M1366.5 620.9L1344.5 607.7M1366.5 620.9L1365.3 587.2M1366.5 620.9L1386.1 600.1M1366.5 620.9L1385.9 633.3M1366.5 620.9L1344.3 642.5M1366.5 620.9L1365.2 655.4M1403.6 578.9L1384.2 566.2M1403.6 578.9L1401 545.3M1403.6 578.9L1404.1 612.2M1403.6 578.9L1386.1 600.1M1403.6 578.9L1418 545.3M1403.6 578.9L1420 579.2M1268.4 702.4L1243.2 686.8M1268.4 702.4L1270.5 668.2M1268.4 702.4L1295.1 683.4M1268.4 702.4L1291.7 716.8M1268.4 702.4L1235.1 724.2M1268.4 702.4L1259.8 739.5M1320.1 663.5L1317.4 697.2M1320.1 663.5L1295.1 683.4M1320.1 663.5L1296.7 648.8M1320.1 663.5L1321 629M1320.1 663.5L1344.3 642.5M1320.1 663.5L1342.2 676.9M1271.1 633.2L1270.5 668.2M1271.1 633.2L1244.4 652M1271.1 633.2L1296.4 613.9M1271.1 633.2L1296.7 648.8M1271.1 633.2L1249.4 612.8M1271.1 633.2L1275.5 593.5M1392.8 708.5L1384.9 738.9M1392.8 708.5L1371.8 730.8M1392.8 708.5L1378.6 699.5M1392.8 708.5L1398.7 677.1M1392.8 708.5L1406.1 709.7M1392.8 708.5L1412.8 678.3M1361.8 689.2L1383.2 667.5M1361.8 689.2L1378.6 699.5M1361.8 689.2L1356.2 721.2M1361.8 689.2L1338.3 710.1M1361.8 689.2L1342.2 676.9M1361.8 689.2L1365.2 655.4M1348.7 752L1371.8 730.8M1348.7 752L1363.1 760.9M1348.7 752L1331.9 741.7M1348.7 752L1356.2 721.2M1348.7 752L1336.9 787.1M1348.7 752L1321.2 777.5M1001.1 827.6L980.4 805.3M1001.1 827.6L1014.2 794.9M1001.1 827.6L1035.2 817M1001.1 827.6L1021.7 848.5M1001.1 827.6L959.5 828.7M1001.1 827.6L980.4 850.9M1068.9 804.8L1055.7 837.4M1068.9 804.8L1035.2 817M1068.9 804.8L1048.1 783.2M1068.9 804.8L1081.3 770.4M1068.9 804.8L1090.5 825.2M1068.9 804.8L1103.4 791.4M1026.9 760.3L1014.2 794.9M1026.9 760.3L993.3 771.5M1026.9 760.3L1060.2 747.8M1026.9 760.3L1048.1 783.2M1026.9 760.3L993.3 740.2M1026.9 760.3L1027.2 728.4M1150.4 874.6L1134.8 902M1150.4 874.6L1116.2 888.8M1150.4 874.6L1131.4 860.1M1150.4 874.6L1164.8 845M1150.4 874.6L1172.2 888.9M1150.4 874.6L1187.5 860.2M1111.5 843.9L1145.2 829.5M1111.5 843.9L1131.4 860.1M1111.5 843.9L1096.8 873.6M1111.5 843.9L1077 856.7M1111.5 843.9L1090.5 825.2M1111.5 843.9L1124.9 811.2M1081.2 901.1L1116.2 888.8M1081.2 901.1L1100 915M1081.2 901.1L1061.9 885.3M1081.2 901.1L1096.8 873.6M1081.2 901.1L1060.8 923.1M1081.2 901.1L1041.5 907.8M1156.5 704.1L1186.9 687.6M1156.5 704.1L1178.8 724.9M1156.5 704.1L1147.5 741M1156.5 704.1L1125.1 719.7M1156.5 704.1L1157.7 669.5M1156.5 704.1L1126.3 685.7M1137.2 776.5L1115.5 756M1137.2 776.5L1147.5 741M1137.2 776.5L1169.2 761.2M1137.2 776.5L1158.1 795.7M1137.2 776.5L1124.9 811.2M1137.2 776.5L1103.4 791.4M1200 744.6L1178.8 724.9M1200 744.6L1208.9 708M1200 744.6L1189.7 779.8M1200 744.6L1169.2 761.2M1200 744.6L1235.1 724.2M1200 744.6L1225.5 760.7M1291.5 801.2L1303.3 766.4M1291.5 801.2L1321.2 777.5M1291.5 801.2L1308.2 811.8M1291.5 801.2L1277.5 834.1M1291.5 801.2L1271.4 789.1M1291.5 801.2L1258.3 823.4M1249.2 775.1L1214.4 795.2M1249.2 775.1L1225.5 760.7M1249.2 775.1L1259.8 739.5M1249.2 775.1L1282.1 753.3M1249.2 775.1L1271.4 789.1M1249.2 775.1L1237.1 810.3M1223.1 843.5L1243.2 855.3M1223.1 843.5L1208.7 873.2M1223.1 843.5L1187.5 860.2M1223.1 843.5L1201.3 829.5M1223.1 843.5L1237.1 810.3M1223.1 843.5L1258.3 823.4M1143.5 986.1L1163.5 971.8M1143.5 986.1L1176.4 972M1143.5 986.1L1155.5 984.9M1143.5 986.1L1122.2 997.4M1143.5 986.1L1129.3 985.3M1143.5 986.1L1108.4 998.2M1166.6 981.4L1188.2 970M1166.6 981.4L1198.6 965.9M1166.6 981.4L1133.6 994.6M1166.6 981.4L1155.5 984.9M1082.1 969L1100.6 949.3M1082.1 969L1117.5 958.1M1082.1 969L1098.5 976.6M1082.1 969L1062.8 985.9M1082.1 969L1061.3 957.5M1082.1 969L1042.2 976.1M1114.2 982L1078.9 992.2M1114.2 982L1098.5 976.6M1114.2 982L1133.7 964.8M1114.2 982L1148.7 969.4M1114.2 982L1129.3 985.3M1114.2 982L1093.8 996.5M1030.3 1020.1L995 1023.8M1030.3 1020.1L1016.2 1020.7M1030.3 1020.1L1051.7 1015.5M1030.3 1020.1L1065.3 1014M1072.5 1007.7L1086.5 1007.9M1072.5 1007.7L1051.7 1015.5M1072.5 1007.7L1037.3 1014.4M1072.5 1007.7L1058 1005.1M1072.5 1007.7L1093.8 996.5M1072.5 1007.7L1108.4 998.2M1001.7 1018.7L1016.2 1020.7M1001.7 1018.7L980.7 1023.4M1001.7 1018.7L1022.5 1010.8M1001.7 1018.7L1037.3 1014.4M1001.7 1018.7L959.5 1020.4M1001.7 1018.7L980.7 1014.1M917.9 827.6L938.6 805.3M917.9 827.6L959.5 828.7M917.9 827.6L938.6 850.9M917.9 827.6L897.3 848.5M917.9 827.6L904.8 794.9M917.9 827.6L883.8 817M959.5 872.4L918.1 871.3M959.5 872.4L938.6 850.9M959.5 872.4L980.4 850.9M959.5 872.4L1000.9 871.3M959.5 872.4L938.6 893.3M959.5 872.4L980.4 893.3M879.2 942.9L839.6 936.2M879.2 942.9L858.2 923.1M879.2 942.9L898.4 928.5M879.2 942.9L919.2 947M879.2 942.9L857.7 957.5M879.2 942.9L898 963M917.8 912.1L938.6 931.3M917.8 912.1L898.4 928.5M917.8 912.1L877.5 907.8M917.8 912.1L897.3 890.9M917.8 912.1L938.6 893.3M917.8 912.1L959.5 913.5M837.8 901.1L858.2 923.1M837.8 901.1L819 915M837.8 901.1L857.1 885.3M837.8 901.1L877.5 907.8M837.8 901.1L802.8 888.8M837.8 901.1L822.2 873.6M1001.2 912.1L1021.7 890.9M1001.2 912.1L1041.5 907.8M1001.2 912.1L1020.6 928.5M1001.2 912.1L980.4 931.3M1001.2 912.1L959.5 913.5M1001.2 912.1L980.4 893.3M1039.8 942.9L1060.8 923.1M1039.8 942.9L1079.4 936.2M1039.8 942.9L999.8 947M1039.8 942.9L1020.6 928.5M1039.8 942.9L1061.3 957.5M1039.8 942.9L1021 963M752.4 981.4L720.4 965.9M752.4 981.4L730.8 970M752.4 981.4L763.5 984.9M752.4 981.4L785.4 994.6M775.5 986.1L796.8 997.4M775.5 986.1L763.5 984.9M775.5 986.1L742.6 972M775.5 986.1L755.5 971.8M775.5 986.1L810.6 998.2M775.5 986.1L789.7 985.3M710.7 955.6L730.8 970M710.7 955.6L699.5 953M710.7 955.6L723.2 956.1M710.7 955.6L742.6 972M710.7 955.6L676.1 936.2M710.7 955.6L687.8 938.1M917.3 1018.7L938.3 1023.4M917.3 1018.7L902.8 1020.7M917.3 1018.7L881.7 1014.4M917.3 1018.7L896.5 1010.8M917.3 1018.7L959.5 1020.4M917.3 1018.7L938.3 1014.1M846.5 1007.7L861 1005.1M846.5 1007.7L881.7 1014.4M846.5 1007.7L867.3 1015.5M846.5 1007.7L832.5 1007.9M846.5 1007.7L810.6 998.2M846.5 1007.7L825.2 996.5M888.7 1020.1L902.8 1020.7M888.7 1020.1L924 1023.8M888.7 1020.1L853.7 1014M888.7 1020.1L867.3 1015.5M766.9 944.8L783.4 936.9M766.9 944.8L801.5 958.1M766.9 944.8L785.3 964.8M766.9 944.8L751.3 950.7M766.9 944.8L746.1 923.8M766.9 944.8L730 930.6M804.8 982L770.3 969.4M804.8 982L785.3 964.8M804.8 982L820.5 976.6M804.8 982L840.1 992.2M804.8 982L825.2 996.5M804.8 982L789.7 985.3M836.9 969L801.5 958.1M836.9 969L818.4 949.3M836.9 969L856.2 985.9M836.9 969L820.5 976.6M836.9 969L857.7 957.5M836.9 969L876.8 976.1M1001.8 980.3L980.7 965.8M1001.8 980.3L1021 963M1001.8 980.3L1042.2 976.1M1001.8 980.3L1022.6 991.7M1001.8 980.3L959.5 981.9M1001.8 980.3L980.7 995M917.2 980.3L896.4 991.7M917.2 980.3L876.8 976.1M917.2 980.3L898 963M917.2 980.3L938.3 965.8M917.2 980.3L959.5 981.9M917.2 980.3L938.3 995M959.5 1006.4L1001.4 1004.8M959.5 1006.4L980.7 1014.1M959.5 1006.4L938.3 1014.1M959.5 1006.4L917.6 1004.8M959.5 1006.4L938.3 995M959.5 1006.4L980.7 995M1320.4 876.7L1298.9 896.3M1320.4 876.7L1319.3 875.6M1320.4 876.7L1341.3 854.3M1360.1 830L1338.9 851.9M1360.1 830L1355.8 827.5M1360.1 830L1376.5 804.8M1360.1 830L1379.3 806.5M1360.1 830L1361.5 831M1360.1 830L1341.3 854.3M1390.9 778.1L1371.1 801.4M1390.9 778.1L1384.2 774M1390.9 778.1L1395 780.6M1390.9 778.1L1376.5 804.8M1390.9 778.1L1405.5 744.8M1390.9 778.1L1411 748.2M1434.1 579.1L1419.8 612.4M1434.1 579.1L1420 579.2M1434.1 579.1L1432.9 545.4M1434.1 579.1L1445.4 545.4M1434.1 579.1L1433.3 613.4M1434.1 579.1L1446.2 579.6M1429.4 511.5L1418 545.3M1429.4 511.5L1413.9 511.5M1429.4 511.5L1442.6 511.5M1429.4 511.5L1432.9 545.4M1429.4 511.5L1418 477.7M1429.4 511.5L1432.9 477.6M1417 709.8L1397.3 739.7M1417 709.8L1406.1 709.7M1417 709.8L1424.6 678.9M1417 709.8L1433.9 678.7M1417 709.8L1405.5 744.8M1417 709.8L1424.1 713.9M1430 647.1L1440.2 647.1M1430 647.1L1424.6 678.9M1430 647.1L1412.8 678.3M1430 647.1L1417.4 646.4M1430 647.1L1433.3 613.4M1430 647.1L1444.5 613.7M1468.1 511.5L1471.8 511.5M1468.1 511.5L1468.7 545.8M1468.1 511.5L1463.5 545.7M1468.1 511.5L1462 511.5M1468.1 511.5L1468.7 477.2M1468.1 511.5L1463.5 477.3M1455.7 579.7L1455.9 545.7M1455.7 579.7L1463.5 545.7M1455.7 579.7L1462.4 579.9M1455.7 579.7L1453.1 613.3M1455.7 579.7L1444.5 613.7M1455.7 579.7L1446.2 579.6M1466.7 579.8L1468.7 545.8M1466.7 579.8L1471.4 545.8M1466.7 579.8L1458.8 613.5M1466.7 579.8L1462.4 579.9M1466.7 579.8L1468.4 580.1M1466.7 579.8L1462.1 614.4M1454.4 648.3L1452.8 647.8M1454.4 648.3L1462.1 614.4M1454.4 648.3L1443 683.1M1428.3 716.7L1413.8 749.9M1428.3 716.7L1411 748.2M1428.3 716.7L1424.1 713.9M1428.3 716.7L1439.7 682.2M1428.3 716.7L1443 683.1M1428.3 716.7L1429.9 717.4M1027.1 695.5L1060.4 715.5M1027.1 695.5L1027.2 728.4M1027.1 695.5L993.4 707.5M1027.1 695.5L993.4 674.2M1027.1 695.5L1061.4 681.3M1027.1 695.5L1027.6 660.4M1157.8 634.1L1187.7 652.6M1157.8 634.1L1157.7 669.5M1157.8 634.1L1126.9 650.5M1157.8 634.1L1126.7 614.8M1157.8 634.1L1192.8 613.3M1157.8 634.1L1161.9 594.2M1095.1 666.2L1095.1 630.9M1095.1 666.2L1126.9 650.5M1095.1 666.2L1126.3 685.7M1095.1 666.2L1094.4 700.7M1095.1 666.2L1061.4 681.3M1095.1 666.2L1061.7 645.8M1027.7 624.5L993.7 638.5M1027.7 624.5L993.7 603.7M1027.7 624.5L1027.9 589.3M1027.7 624.5L1061.3 610M1027.7 624.5L1061.7 645.8M1027.7 624.5L1027.6 660.4M1027.8 553.7L993.8 568.2M1027.8 553.7L993.8 532.7M1027.8 553.7L1061.5 574.5M1027.8 553.7L1027.9 589.3M1027.8 553.7L1028.1 511.5M1027.8 553.7L1062.4 532.7M1324.7 511.5L1323.6 470.1M1324.7 511.5L1344.3 490.6M1324.7 511.5L1344.3 532.4M1324.7 511.5L1323.6 552.9M1324.7 511.5L1302.3 490.6M1324.7 511.5L1302.3 532.4M1226.1 431.2L1222 391.6M1226.1 431.2L1249.4 410.2M1226.1 431.2L1252.8 450.4M1226.1 431.2L1228.6 471.2M1226.1 431.2L1192.8 409.7M1226.1 431.2L1196.2 450M1278 469.8L1254.5 490.6M1278 469.8L1252.8 450.4M1278 469.8L1275.5 429.5M1278 469.8L1299.9 449.3M1278 469.8L1302.3 490.6M1278 469.8L1279 511.5M1278 553.2L1299.9 573.7M1278 553.2L1275.5 593.5M1278 553.2L1252.8 572.6M1278 553.2L1254.5 532.4M1278 553.2L1279 511.5M1278 553.2L1302.3 532.4M1226.1 591.8L1249.4 612.8M1226.1 591.8L1222 631.4M1226.1 591.8L1228.6 551.8M1226.1 591.8L1252.8 572.6M1226.1 591.8L1192.8 613.3M1226.1 591.8L1196.2 573M1027.1 327.5L993.4 348.8M1027.1 327.5L993.4 315.5M1027.1 327.5L1027.2 294.6M1027.1 327.5L1060.4 307.5M1027.1 327.5L1027.6 362.6M1027.1 327.5L1061.4 341.7M1027.8 469.3L993.8 490.3M1027.8 469.3L993.8 454.8M1027.8 469.3L1027.9 433.7M1027.8 469.3L1061.5 448.5M1027.8 469.3L1028.1 511.5M1027.8 469.3L1062.4 490.3M1027.7 398.5L1061.3 413M1027.7 398.5L1027.9 433.7M1027.7 398.5L993.7 419.3M1027.7 398.5L993.7 384.5M1027.7 398.5L1027.6 362.6M1027.7 398.5L1061.7 377.2M1095.1 356.8L1094.4 322.3M1095.1 356.8L1126.3 337.3M1095.1 356.8L1126.9 372.5M1095.1 356.8L1095.1 392.1M1095.1 356.8L1061.7 377.2M1095.1 356.8L1061.4 341.7M1157.8 388.9L1157.7 353.5M1157.8 388.9L1187.7 370.4M1157.8 388.9L1126.7 408.2M1157.8 388.9L1126.9 372.5M1157.8 388.9L1192.8 409.7M1157.8 388.9L1161.9 428.8M1164.7 553.8L1197.9 532.7M1164.7 553.8L1196.2 573M1164.7 553.8L1161.9 594.2M1164.7 553.8L1130.2 574.6M1164.7 553.8L1165.4 511.5M1164.7 553.8L1131.1 532.7M1164.7 469.2L1130.2 448.4M1164.7 469.2L1161.9 428.8M1164.7 469.2L1196.2 450M1164.7 469.2L1197.9 490.3M1164.7 469.2L1165.4 511.5M1164.7 469.2L1131.1 490.3M1096.3 511.5L1095.8 553.4M1096.3 511.5L1062.4 532.7M1096.3 511.5L1062.4 490.3M1096.3 511.5L1095.8 469.6M1096.3 511.5L1131.1 490.3M1096.3 511.5L1131.1 532.7M666.2 918.5L700.6 937.9M666.2 918.5L687.8 938.1M666.2 918.5L654 917.3M666.2 918.5L633.6 896.5M666.2 918.5L679.6 917.2M666.2 918.5L645.8 896.3M726.4 900.7L763 915.1M726.4 900.7L746.1 923.8M726.4 900.7L709.8 908.2M726.4 900.7L691.2 883.9M726.4 900.7L746.8 888.9M726.4 900.7L710.3 873.2M694.5 913.8L675.3 890.3M694.5 913.8L709.8 908.2M694.5 913.8L730 930.6M694.5 913.8L715 935.2M694.5 913.8L679.6 917.2M694.5 913.8L659.8 894.2M627.1 872.1L614.3 873M627.1 872.1L597.4 848.7M627.1 872.1L610.9 847.1M627.1 872.1L641.5 869.4M627.1 872.1L659.8 894.2M627.1 872.1L645.8 896.3M596.4 820.4L582.2 822.5M596.4 820.4L569 795.2M596.4 820.4L626 843.7M596.4 820.4L610.9 847.1M596.4 820.4L582.1 787.1M596.4 820.4L610.8 811.8M850.1 804.8L837.7 770.4M850.1 804.8L870.9 783.2M850.1 804.8L883.8 817M850.1 804.8L863.3 837.4M850.1 804.8L815.6 791.4M850.1 804.8L828.5 825.2M719 744.6L710.1 708M719 744.6L740.2 724.9M719 744.6L749.8 761.2M719 744.6L729.3 779.8M719 744.6L683.9 724.2M719 744.6L693.5 760.7M781.8 776.5L760.9 795.7M781.8 776.5L749.8 761.2M781.8 776.5L771.5 741M781.8 776.5L803.5 756M781.8 776.5L815.6 791.4M781.8 776.5L794.1 811.2M807.5 843.9L842 856.7M807.5 843.9L822.2 873.6M807.5 843.9L787.6 860.1M807.5 843.9L773.8 829.5M807.5 843.9L794.1 811.2M807.5 843.9L828.5 825.2M768.6 874.6L802.8 888.8M768.6 874.6L784.2 902M768.6 874.6L754.2 845M768.6 874.6L787.6 860.1M768.6 874.6L746.8 888.9M768.6 874.6L731.5 860.2M552.5 620.9L533.1 633.3M552.5 620.9L532.9 600.1M552.5 620.9L553.7 587.2M552.5 620.9L574.5 607.7M552.5 620.9L553.8 655.4M552.5 620.9L574.7 642.5M570.3 752L555.9 760.9M570.3 752L547.2 730.8M570.3 752L562.8 721.2M570.3 752L587.1 741.7M570.3 752L582.1 787.1M570.3 752L597.8 777.5M557.2 689.2L580.7 710.1M557.2 689.2L562.8 721.2M557.2 689.2L540.4 699.5M557.2 689.2L535.8 667.5M557.2 689.2L553.8 655.4M557.2 689.2L576.8 676.9M598.9 663.5L598 629M598.9 663.5L622.3 648.8M598.9 663.5L623.9 683.4M598.9 663.5L601.6 697.2M598.9 663.5L576.8 676.9M598.9 663.5L574.7 642.5M650.6 702.4L648.5 668.2M650.6 702.4L675.8 686.8M650.6 702.4L627.3 716.8M650.6 702.4L623.9 683.4M650.6 702.4L683.9 724.2M650.6 702.4L659.2 739.5M695.9 843.5L717.7 829.5M695.9 843.5L731.5 860.2M695.9 843.5L710.3 873.2M695.9 843.5L675.8 855.3M695.9 843.5L681.9 810.3M695.9 843.5L660.7 823.4M669.8 775.1L636.9 753.3M669.8 775.1L659.2 739.5M669.8 775.1L693.5 760.7M669.8 775.1L704.6 795.2M669.8 775.1L681.9 810.3M669.8 775.1L647.6 789.1M627.5 801.2L641.5 834.1M627.5 801.2L610.8 811.8M627.5 801.2L597.8 777.5M627.5 801.2L615.7 766.4M627.5 801.2L647.6 789.1M627.5 801.2L660.7 823.4M1434.1 443.9L1445.4 477.6M1434.1 443.9L1432.9 477.6M1434.1 443.9L1420 443.8M1434.1 443.9L1419.8 410.6M1434.1 443.9L1446.2 443.4M1434.1 443.9L1433.3 409.6M1466.7 443.2L1471.4 477.2M1466.7 443.2L1468.7 477.2M1466.7 443.2L1462.4 443.1M1466.7 443.2L1458.8 409.5M1466.7 443.2L1468.4 442.9M1466.7 443.2L1462.1 408.6M1455.7 443.3L1453.1 409.7M1455.7 443.3L1462.4 443.1M1455.7 443.3L1463.5 477.3M1455.7 443.3L1455.9 477.3M1455.7 443.3L1446.2 443.4M1455.7 443.3L1444.5 409.3M1430 375.9L1417.4 376.6M1430 375.9L1412.8 344.7M1430 375.9L1424.6 344.1M1430 375.9L1440.2 375.9M1430 375.9L1444.5 409.3M1430 375.9L1433.3 409.6M1417 313.2L1406.1 313.3M1417 313.2L1397.3 283.3M1417 313.2L1433.9 344.3M1417 313.2L1424.6 344.1M1417 313.2L1405.5 278.2M1417 313.2L1424.1 309.1M1320.4 146.3L1319.3 147.4M1320.4 146.3L1298.9 126.7M1320.4 146.3L1341.3 168.7M1390.9 244.9L1384.2 249M1390.9 244.9L1371.1 221.6M1390.9 244.9L1376.5 218.2M1390.9 244.9L1395 242.4M1390.9 244.9L1405.5 278.2M1390.9 244.9L1411 274.8M1360.1 193L1379.3 216.5M1360.1 193L1376.5 218.2M1360.1 193L1355.8 195.5M1360.1 193L1338.9 171.1M1360.1 193L1341.3 168.7M1360.1 193L1361.5 192M1454.4 374.7L1462.1 408.6M1454.4 374.7L1452.8 375.2M1454.4 374.7L1443 339.9M1428.3 306.3L1439.7 340.8M1428.3 306.3L1424.1 309.1M1428.3 306.3L1411 274.8M1428.3 306.3L1413.8 273.1M1428.3 306.3L1429.9 305.6M1428.3 306.3L1443 339.9M665.7 90.8L676.1 86.8M665.7 90.8L699.5 70M665.7 90.8L642.3 107.7M676.1 86.8L699.5 70M676.1 86.8L654 105.7M676.1 86.8L687.8 84.9M699.5 70L730.8 53M699.5 70L720.4 57.1M633.6 126.5L654 105.7M633.6 126.5L622.5 129.1M633.6 126.5L614.3 150M633.6 126.5L645.8 126.7M654 105.7L622.5 129.1M654 105.7L687.8 84.9M622.5 129.1L620.1 126.7M622.5 129.1L599.7 147.4M723.2 66.9L687.8 84.9M723.2 66.9L700.6 85.1M723.2 66.9L755.5 51.2M723.2 66.9L742.6 51M687.8 84.9L700.6 85.1M700.6 85.1L715 87.8M700.6 85.1L679.6 105.8M569 227.8L582.2 200.5M569 227.8L556 226.6M569 227.8L555.9 262.1M569 227.8L582.1 235.9M582.2 200.5L556 226.6M582.2 200.5L610.9 175.9M582.2 200.5L597.4 174.3M556 226.6L547.9 221.6M556 226.6L534.8 249M641.5 153.6L610.9 175.9M641.5 153.6L626 179.3M641.5 153.6L675.3 132.7M641.5 153.6L659.8 128.8M610.9 175.9L626 179.3M610.9 175.9L597.4 174.3M626 179.3L610.8 211.2M626 179.3L641.5 188.9M585.7 174.6L597.4 174.3M585.7 174.6L614.3 150M585.7 174.6L580.1 171.1M585.7 174.6L563.2 195.5M597.4 174.3L614.3 150M614.3 150L645.8 126.7M783.4 86.1L746.1 99.2M783.4 86.1L763 107.9M783.4 86.1L818.4 73.7M783.4 86.1L801.5 64.9M746.1 99.2L763 107.9M746.1 99.2L730 92.4M746.1 99.2L709.8 114.8M763 107.9L784.2 121M763 107.9L746.8 134.1M715 87.8L730 92.4M715 87.8L751.3 72.3M715 87.8L679.6 105.8M730 92.4L751.3 72.3M730 92.4L709.8 114.8M751.3 72.3L785.3 58.2M751.3 72.3L770.3 53.6M691.2 139.1L709.8 114.8M691.2 139.1L675.3 132.7M691.2 139.1L675.8 167.7M691.2 139.1L710.3 149.8M709.8 114.8L675.3 132.7M675.3 132.7L659.8 128.8M645.8 126.7L659.8 128.8M645.8 126.7L679.6 105.8M659.8 128.8L679.6 105.8M538.8 490.6L534.8 456.8M538.8 490.6L518 477.7M538.8 490.6L538.8 532.4M538.8 490.6L555.7 511.5M534.8 456.8L518 477.7M534.8 456.8L553.7 435.8M534.8 456.8L532.9 422.9M518 477.7L501 477.7M518 477.7L505.1 511.5M574.5 415.3L553.7 435.8M574.5 415.3L577.1 449.3M574.5 415.3L598 394M574.5 415.3L574.7 380.5M553.7 435.8L577.1 449.3M553.7 435.8L532.9 422.9M577.1 449.3L574.7 490.6M577.1 449.3L595.4 470.1M514.9 410.8L532.9 422.9M514.9 410.8L533.1 389.7M514.9 410.8L499.2 410.6M514.9 410.8L499 443.8M532.9 422.9L533.1 389.7M533.1 389.7L535.8 355.5M533.1 389.7L553.8 367.6M675.8 336.2L648.5 354.8M675.8 336.2L674.6 371M675.8 336.2L710.1 315M675.8 336.2L683.9 298.8M648.5 354.8L674.6 371M648.5 354.8L623.9 339.6M648.5 354.8L622.3 374.2M674.6 371L669.6 410.2M674.6 371L697 391.6M601.6 325.8L623.9 339.6M601.6 325.8L627.3 306.2M601.6 325.8L580.7 312.9M601.6 325.8L576.8 346.1M623.9 339.6L627.3 306.2M623.9 339.6L622.3 374.2M627.3 306.2L659.2 283.5M627.3 306.2L636.9 269.7M622.6 409.1L622.3 374.2M622.6 409.1L598 394M622.6 409.1L619.1 449.3M622.6 409.1L643.5 429.5M622.3 374.2L598 394M598 394L574.7 380.5M534.1 284.1L547.2 292.2M534.1 284.1L555.9 262.1M534.1 284.1L521.7 283.3M534.1 284.1L512.9 313.3M547.2 292.2L555.9 262.1M547.2 292.2L540.4 323.5M547.2 292.2L562.8 301.8M555.9 262.1L582.1 235.9M535.8 355.5L540.4 323.5M535.8 355.5L520.3 345.9M535.8 355.5L553.8 367.6M540.4 323.5L520.3 345.9M540.4 323.5L562.8 301.8M520.3 345.9L506.2 344.7M520.3 345.9L501.6 376.6M587.1 281.3L562.8 301.8M587.1 281.3L580.7 312.9M587.1 281.3L615.7 256.6M587.1 281.3L597.8 245.5M562.8 301.8L580.7 312.9M580.7 312.9L576.8 346.1M574.7 380.5L576.8 346.1M574.7 380.5L553.8 367.6M576.8 346.1L553.8 367.6M938.6 217.7L904.8 228.1M938.6 217.7L925.7 251.5M938.6 217.7L980.4 217.7M938.6 217.7L959.5 194.3M904.8 228.1L925.7 251.5M904.8 228.1L883.8 206M904.8 228.1L870.9 239.8M925.7 251.5L925.7 282.8M925.7 251.5L959.5 272.4M863.3 185.6L883.8 206M863.3 185.6L897.3 174.5M863.3 185.6L842 166.3M863.3 185.6L828.5 197.8M883.8 206L897.3 174.5M883.8 206L870.9 239.8M897.3 174.5L938.6 172.1M897.3 174.5L918.1 151.7M858.8 275.2L870.9 239.8M858.8 275.2L837.7 252.6M858.8 275.2L858.6 307.5M858.8 275.2L891.8 294.6M870.9 239.8L837.7 252.6M837.7 252.6L803.5 267M837.7 252.6L815.6 231.6M784.2 121L802.8 134.2M784.2 121L819 108M784.2 121L746.8 134.1M802.8 134.2L819 108M802.8 134.2L787.6 162.9M802.8 134.2L822.2 149.4M819 108L858.2 99.9M819 108L839.6 86.8M773.8 193.5L787.6 162.9M773.8 193.5L754.2 178M773.8 193.5L760.9 227.3M773.8 193.5L794.1 211.8M787.6 162.9L754.2 178M787.6 162.9L822.2 149.4M754.2 178L731.5 162.8M754.2 178L717.7 193.5M857.1 137.7L822.2 149.4M857.1 137.7L842 166.3M857.1 137.7L897.3 132.1M857.1 137.7L877.5 115.2M822.2 149.4L842 166.3M842 166.3L828.5 197.8M732.1 335.4L740.2 298.1M732.1 335.4L710.1 315M732.1 335.4L731.3 370.4M732.1 335.4L761.3 353.5M740.2 298.1L710.1 315M740.2 298.1L771.5 282M740.2 298.1L749.8 261.8M710.1 315L683.9 298.8M803.5 267L771.5 282M803.5 267L793.9 303.3M803.5 267L815.6 231.6M771.5 282L793.9 303.3M771.5 282L749.8 261.8M793.9 303.3L792.7 337.3M793.9 303.3L824.6 322.3M729.3 243.2L749.8 261.8M729.3 243.2L760.9 227.3M729.3 243.2L704.6 227.8M729.3 243.2L693.5 262.3M749.8 261.8L760.9 227.3M760.9 227.3L794.1 211.8M828.5 197.8L794.1 211.8M828.5 197.8L815.6 231.6M794.1 211.8L815.6 231.6M582.1 235.9L597.8 245.5M582.1 235.9L610.8 211.2M615.7 256.6L597.8 245.5M615.7 256.6L636.9 269.7M615.7 256.6L647.6 233.9M597.8 245.5L610.8 211.2M610.8 211.2L641.5 188.9M641.5 188.9L675.8 167.7M641.5 188.9L660.7 199.6M683.9 298.8L693.5 262.3M683.9 298.8L659.2 283.5M704.6 227.8L693.5 262.3M704.6 227.8L717.7 193.5M704.6 227.8L681.9 212.7M693.5 262.3L659.2 283.5M659.2 283.5L636.9 269.7M636.9 269.7L647.6 233.9M746.8 134.1L710.3 149.8M746.8 134.1L731.5 162.8M675.8 167.7L710.3 149.8M675.8 167.7L660.7 199.6M710.3 149.8L731.5 162.8M731.5 162.8L717.7 193.5M717.7 193.5L681.9 212.7M647.6 233.9L681.9 212.7M647.6 233.9L660.7 199.6M681.9 212.7L660.7 199.6M730.8 53L720.4 57.1M730.8 53L742.6 51M730.8 53L763.5 38.1M755.5 51.2L742.6 51M755.5 51.2L770.3 53.6M755.5 51.2L789.7 37.7M742.6 51L763.5 38.1M785.4 28.4L763.5 38.1M785.4 28.4L796.8 25.6M763.5 38.1L796.8 25.6M796.8 25.6L832.5 15.1M796.8 25.6L810.6 24.8M818.4 73.7L801.5 64.9M818.4 73.7L839.6 86.8M818.4 73.7L857.7 65.5M801.5 64.9L820.5 46.4M801.5 64.9L785.3 58.2M840.1 30.8L820.5 46.4M840.1 30.8L856.2 37.1M840.1 30.8L861 17.9M840.1 30.8L825.2 26.5M820.5 46.4L856.2 37.1M820.5 46.4L785.3 58.2M856.2 37.1L876.8 46.9M856.2 37.1L896.4 31.3M785.3 58.2L770.3 53.6M770.3 53.6L789.7 37.7M924 -0.8L902.8 2.3M924 -0.8L938.3 -0.4M902.8 2.3L938.3 -0.4M902.8 2.3L867.3 7.5M902.8 2.3L881.7 8.6M938.3 -0.4L980.7 -0.4M938.3 -0.4L959.5 2.6M832.5 15.1L867.3 7.5M832.5 15.1L853.7 9M832.5 15.1L810.6 24.8M867.3 7.5L853.7 9M867.3 7.5L881.7 8.6M896.5 12.2L881.7 8.6M896.5 12.2L861 17.9M896.5 12.2L917.6 18.2M896.5 12.2L938.3 8.9M881.7 8.6L861 17.9M861 17.9L825.2 26.5M789.7 37.7L825.2 26.5M789.7 37.7L810.6 24.8M825.2 26.5L810.6 24.8M980.4 217.7L959.5 194.3M980.4 217.7L993.3 251.5M980.4 217.7L1014.2 228.1M959.5 194.3L980.4 172.1M959.5 194.3L938.6 172.1M1000.9 151.7L980.4 172.1M1000.9 151.7L1021.7 174.5M1000.9 151.7L1021.7 132.1M1000.9 151.7L980.4 129.7M980.4 172.1L1021.7 174.5M980.4 172.1L938.6 172.1M1021.7 174.5L1035.2 206M1021.7 174.5L1055.7 185.6M938.6 172.1L918.1 151.7M918.1 151.7L897.3 132.1M918.1 151.7L938.6 129.7M1079.4 86.8L1060.8 99.9M1079.4 86.8L1100 108M1079.4 86.8L1100.6 73.7M1079.4 86.8L1061.3 65.5M1060.8 99.9L1100 108M1060.8 99.9L1020.6 94.5M1060.8 99.9L1041.5 115.2M1100 108L1116.2 134.2M1100 108L1134.8 121M980.4 91.7L1020.6 94.5M980.4 91.7L999.8 76M980.4 91.7L938.6 91.7M980.4 91.7L959.5 109.5M1020.6 94.5L999.8 76M1020.6 94.5L1041.5 115.2M999.8 76L1021 60M999.8 76L980.7 57.2M1061.9 137.7L1041.5 115.2M1061.9 137.7L1021.7 132.1M1061.9 137.7L1077 166.3M1061.9 137.7L1096.8 149.4M1041.5 115.2L1021.7 132.1M1021.7 132.1L980.4 129.7M858.2 99.9L839.6 86.8M858.2 99.9L877.5 115.2M858.2 99.9L898.4 94.5M839.6 86.8L857.7 65.5M897.3 132.1L877.5 115.2M897.3 132.1L938.6 129.7M877.5 115.2L898.4 94.5M919.2 76L898.4 94.5M919.2 76L938.6 91.7M919.2 76L938.3 57.2M919.2 76L898 60M898.4 94.5L938.6 91.7M938.6 91.7L959.5 109.5M980.4 129.7L959.5 109.5M980.4 129.7L938.6 129.7M959.5 109.5L938.6 129.7M1198.6 57.1L1188.2 53M1198.6 57.1L1219.5 70M1188.2 53L1219.5 70M1188.2 53L1155.5 38.1M1188.2 53L1176.4 51M1219.5 70L1242.9 86.8M1219.5 70L1253.3 90.8M1122.2 25.6L1155.5 38.1M1122.2 25.6L1133.6 28.4M1122.2 25.6L1086.5 15.1M1122.2 25.6L1108.4 24.8M1155.5 38.1L1133.6 28.4M1155.5 38.1L1176.4 51M1195.8 66.9L1176.4 51M1195.8 66.9L1163.5 51.2M1195.8 66.9L1218.4 85.1M1195.8 66.9L1231.2 84.9M1176.4 51L1163.5 51.2M1163.5 51.2L1148.7 53.6M1163.5 51.2L1129.3 37.7M980.7 -0.4L1016.2 2.3M980.7 -0.4L995 -0.8M980.7 -0.4L959.5 2.6M1016.2 2.3L995 -0.8M1016.2 2.3L1037.3 8.6M1016.2 2.3L1051.7 7.5M1058 17.9L1037.3 8.6M1058 17.9L1022.5 12.2M1058 17.9L1078.9 30.8M1058 17.9L1093.8 26.5M1037.3 8.6L1022.5 12.2M1037.3 8.6L1051.7 7.5M1022.5 12.2L980.7 8.9M1022.5 12.2L1001.4 18.2M1065.3 9L1051.7 7.5M1065.3 9L1086.5 15.1M1051.7 7.5L1086.5 15.1M1086.5 15.1L1108.4 24.8M1135.6 86.1L1117.5 64.9M1135.6 86.1L1100.6 73.7M1135.6 86.1L1156 107.9M1135.6 86.1L1172.9 99.2M1117.5 64.9L1100.6 73.7M1117.5 64.9L1133.7 58.2M1117.5 64.9L1098.5 46.4M1100.6 73.7L1061.3 65.5M1148.7 53.6L1133.7 58.2M1148.7 53.6L1167.7 72.3M1148.7 53.6L1129.3 37.7M1133.7 58.2L1167.7 72.3M1133.7 58.2L1098.5 46.4M1167.7 72.3L1189 92.4M1167.7 72.3L1204 87.8M1062.8 37.1L1098.5 46.4M1062.8 37.1L1078.9 30.8M1062.8 37.1L1022.6 31.3M1062.8 37.1L1042.2 46.9M1098.5 46.4L1078.9 30.8M1078.9 30.8L1093.8 26.5M1108.4 24.8L1093.8 26.5M1108.4 24.8L1129.3 37.7M1093.8 26.5L1129.3 37.7M857.7 65.5L898 60M857.7 65.5L876.8 46.9M938.3 57.2L898 60M938.3 57.2L980.7 57.2M938.3 57.2L959.5 41.1M898 60L876.8 46.9M876.8 46.9L896.4 31.3M896.4 31.3L917.6 18.2M896.4 31.3L938.3 28M1061.3 65.5L1042.2 46.9M1061.3 65.5L1021 60M1022.6 31.3L1042.2 46.9M1022.6 31.3L1001.4 18.2M1022.6 31.3L980.7 28M1042.2 46.9L1021 60M1021 60L980.7 57.2M980.7 57.2L959.5 41.1M959.5 2.6L938.3 8.9M959.5 2.6L980.7 8.9M917.6 18.2L938.3 8.9M917.6 18.2L938.3 28M938.3 8.9L980.7 8.9M980.7 8.9L1001.4 18.2M1001.4 18.2L980.7 28M959.5 41.1L980.7 28M959.5 41.1L938.3 28M980.7 28L938.3 28M642.3 107.7L620.1 126.7M620.1 126.7L599.7 147.4M599.7 147.4L580.1 171.1M599.7 147.4L577.7 168.7M547.9 221.6L534.8 249M547.9 221.6L563.2 195.5M547.9 221.6L542.5 218.2M534.8 249L521.7 283.3M534.8 249L513.5 278.2M580.1 171.1L563.2 195.5M580.1 171.1L577.7 168.7M563.2 195.5L542.5 218.2M524 242.4L542.5 218.2M524 242.4L539.7 216.5M524 242.4L505.2 273.1M524 242.4L508 274.8M542.5 218.2L539.7 216.5M539.7 216.5L557.5 192M557.5 192L577.7 168.7M501 477.7L505.1 511.5M501 477.7L499 443.8M501 477.7L486.1 477.6M505.1 511.5L501 545.3M505.1 511.5L518 545.3M499.2 410.6L499 443.8M499.2 410.6L501.6 376.6M499.2 410.6L485.7 409.6M499 443.8L486.1 477.6M476.4 511.5L486.1 477.6M476.4 511.5L473.6 477.6M476.4 511.5L473.6 545.4M476.4 511.5L486.1 545.4M486.1 477.6L473.6 477.6M473.6 477.6L463.1 477.3M473.6 477.6L472.8 443.4M521.7 283.3L512.9 313.3M521.7 283.3L513.5 278.2M512.9 313.3L494.4 344.1M512.9 313.3L506.2 344.7M478.8 375.9L494.4 344.1M478.8 375.9L485.1 344.3M478.8 375.9L465.9 409.7M478.8 375.9L474.5 409.3M494.4 344.1L485.1 344.3M494.4 344.1L506.2 344.7M485.1 344.3L494.9 309.1M485.1 344.3L479.3 340.8M506.2 344.7L501.6 376.6M501.6 376.6L485.7 409.6M447.2 511.5L450.3 477.2M447.2 511.5L447.6 477.2M447.2 511.5L447.6 545.8M447.2 511.5L450.3 545.8M450.3 477.2L447.6 477.2M450.3 477.2L455.5 477.3M450.3 477.2L456.6 443.1M447.6 477.2L450.6 442.9M463.1 477.3L455.5 477.3M463.1 477.3L457 511.5M463.1 477.3L472.8 443.4M455.5 477.3L457 511.5M455.5 477.3L456.6 443.1M457 511.5L455.5 545.7M457 511.5L463.1 545.7M460.2 409.5L456.6 443.1M460.2 409.5L465.9 409.7M460.2 409.5L466.2 375.2M460.2 409.5L456.9 408.6M456.6 443.1L465.9 409.7M465.9 409.7L474.5 409.3M485.7 409.6L474.5 409.3M485.7 409.6L472.8 443.4M474.5 409.3L472.8 443.4M450.6 442.9L456.9 408.6M466.2 375.2L456.9 408.6M466.2 375.2L479.3 340.8M466.2 375.2L476 339.9M513.5 278.2L508 274.8M513.5 278.2L494.9 309.1M505.2 273.1L508 274.8M505.2 273.1L489.1 305.6M508 274.8L494.9 309.1M494.9 309.1L479.3 340.8M479.3 340.8L476 339.9M476 339.9L489.1 305.6M1242.9 86.8L1253.3 90.8M1242.9 86.8L1231.2 84.9M1242.9 86.8L1265 105.7M1253.3 90.8L1276.7 107.7M1218.4 85.1L1231.2 84.9M1218.4 85.1L1204 87.8M1218.4 85.1L1239.4 105.8M1231.2 84.9L1265 105.7M1296.5 129.1L1265 105.7M1296.5 129.1L1285.4 126.5M1296.5 129.1L1319.3 147.4M1296.5 129.1L1298.9 126.7M1265 105.7L1285.4 126.5M1285.4 126.5L1304.7 150M1285.4 126.5L1273.2 126.7M1156 107.9L1172.9 99.2M1156 107.9L1134.8 121M1156 107.9L1172.2 134.1M1172.9 99.2L1209.2 114.8M1172.9 99.2L1189 92.4M1243.7 132.7L1209.2 114.8M1243.7 132.7L1227.8 139.1M1243.7 132.7L1277.5 153.6M1243.7 132.7L1259.2 128.8M1209.2 114.8L1227.8 139.1M1209.2 114.8L1189 92.4M1227.8 139.1L1208.7 149.8M1227.8 139.1L1243.2 167.7M1189 92.4L1204 87.8M1204 87.8L1239.4 105.8M1363 226.6L1336.8 200.5M1363 226.6L1350 227.8M1363 226.6L1384.2 249M1363 226.6L1371.1 221.6M1336.8 200.5L1350 227.8M1336.8 200.5L1321.6 174.3M1336.8 200.5L1308.1 175.9M1350 227.8L1363.1 262.1M1350 227.8L1336.9 235.9M1304.7 150L1321.6 174.3M1304.7 150L1333.3 174.6M1304.7 150L1273.2 126.7M1321.6 174.3L1333.3 174.6M1321.6 174.3L1308.1 175.9M1333.3 174.6L1355.8 195.5M1333.3 174.6L1338.9 171.1M1293 179.3L1308.1 175.9M1293 179.3L1277.5 153.6M1293 179.3L1277.5 188.9M1293 179.3L1308.2 211.2M1308.1 175.9L1277.5 153.6M1277.5 153.6L1259.2 128.8M1239.4 105.8L1259.2 128.8M1239.4 105.8L1273.2 126.7M1259.2 128.8L1273.2 126.7M993.3 251.5L1014.2 228.1M993.3 251.5L959.5 272.4M993.3 251.5L993.3 282.8M1014.2 228.1L1048.1 239.8M1014.2 228.1L1035.2 206M1081.3 252.6L1048.1 239.8M1081.3 252.6L1060.2 275.2M1081.3 252.6L1115.5 267M1081.3 252.6L1103.4 231.6M1048.1 239.8L1060.2 275.2M1048.1 239.8L1035.2 206M1060.2 275.2L1027.2 294.6M1060.2 275.2L1060.4 307.5M1035.2 206L1055.7 185.6M1055.7 185.6L1077 166.3M1055.7 185.6L1090.5 197.8M1208.9 315L1178.8 298.1M1208.9 315L1186.9 335.4M1208.9 315L1243.2 336.2M1208.9 315L1235.1 298.8M1178.8 298.1L1186.9 335.4M1178.8 298.1L1169.2 261.8M1178.8 298.1L1147.5 282M1186.9 335.4L1157.7 353.5M1186.9 335.4L1187.7 370.4M1158.1 227.3L1169.2 261.8M1158.1 227.3L1189.7 243.2M1158.1 227.3L1145.2 193.5M1158.1 227.3L1124.9 211.8M1169.2 261.8L1189.7 243.2M1169.2 261.8L1147.5 282M1189.7 243.2L1225.5 262.3M1189.7 243.2L1214.4 227.8M1125.1 303.3L1147.5 282M1125.1 303.3L1115.5 267M1125.1 303.3L1094.4 322.3M1125.1 303.3L1126.3 337.3M1147.5 282L1115.5 267M1115.5 267L1103.4 231.6M1116.2 134.2L1134.8 121M1116.2 134.2L1096.8 149.4M1116.2 134.2L1131.4 162.9M1134.8 121L1172.2 134.1M1077 166.3L1096.8 149.4M1077 166.3L1090.5 197.8M1096.8 149.4L1131.4 162.9M1164.8 178L1131.4 162.9M1164.8 178L1145.2 193.5M1164.8 178L1201.3 193.5M1164.8 178L1187.5 162.8M1131.4 162.9L1145.2 193.5M1145.2 193.5L1124.9 211.8M1103.4 231.6L1124.9 211.8M1103.4 231.6L1090.5 197.8M1124.9 211.8L1090.5 197.8M1401 477.7L1384.2 456.8M1401 477.7L1380.2 490.6M1401 477.7L1413.9 511.5M1401 477.7L1418 477.7M1384.2 456.8L1380.2 490.6M1384.2 456.8L1386.1 422.9M1384.2 456.8L1365.3 435.8M1380.2 490.6L1380.2 532.4M1380.2 490.6L1363.3 511.5M1385.9 389.7L1386.1 422.9M1385.9 389.7L1404.1 410.8M1385.9 389.7L1383.2 355.5M1385.9 389.7L1365.2 367.6M1386.1 422.9L1404.1 410.8M1386.1 422.9L1365.3 435.8M1404.1 410.8L1420 443.8M1404.1 410.8L1419.8 410.6M1341.9 449.3L1365.3 435.8M1341.9 449.3L1344.5 415.3M1341.9 449.3L1323.6 470.1M1341.9 449.3L1344.3 490.6M1365.3 435.8L1344.5 415.3M1344.5 415.3L1321 394M1344.5 415.3L1344.3 380.5M1363.1 262.1L1371.8 292.2M1363.1 262.1L1384.9 284.1M1363.1 262.1L1336.9 235.9M1371.8 292.2L1384.9 284.1M1371.8 292.2L1356.2 301.8M1371.8 292.2L1378.6 323.5M1384.9 284.1L1406.1 313.3M1384.9 284.1L1397.3 283.3M1338.3 312.9L1356.2 301.8M1338.3 312.9L1331.9 281.3M1338.3 312.9L1317.4 325.8M1338.3 312.9L1342.2 346.1M1356.2 301.8L1331.9 281.3M1356.2 301.8L1378.6 323.5M1331.9 281.3L1321.2 245.5M1331.9 281.3L1303.3 256.6M1398.7 345.9L1378.6 323.5M1398.7 345.9L1383.2 355.5M1398.7 345.9L1417.4 376.6M1398.7 345.9L1412.8 344.7M1378.6 323.5L1383.2 355.5M1383.2 355.5L1365.2 367.6M1244.4 371L1270.5 354.8M1244.4 371L1243.2 336.2M1244.4 371L1222 391.6M1244.4 371L1249.4 410.2M1270.5 354.8L1243.2 336.2M1270.5 354.8L1296.7 374.2M1270.5 354.8L1295.1 339.6M1243.2 336.2L1235.1 298.8M1321 394L1296.7 374.2M1321 394L1296.4 409.1M1321 394L1344.3 380.5M1296.7 374.2L1296.4 409.1M1296.7 374.2L1295.1 339.6M1296.4 409.1L1275.5 429.5M1296.4 409.1L1299.9 449.3M1291.7 306.2L1295.1 339.6M1291.7 306.2L1317.4 325.8M1291.7 306.2L1282.1 269.7M1291.7 306.2L1259.8 283.5M1295.1 339.6L1317.4 325.8M1317.4 325.8L1342.2 346.1M1365.2 367.6L1342.2 346.1M1365.2 367.6L1344.3 380.5M1342.2 346.1L1344.3 380.5M1172.2 134.1L1187.5 162.8M1172.2 134.1L1208.7 149.8M1201.3 193.5L1187.5 162.8M1201.3 193.5L1214.4 227.8M1201.3 193.5L1237.1 212.7M1187.5 162.8L1208.7 149.8M1208.7 149.8L1243.2 167.7M1243.2 167.7L1277.5 188.9M1243.2 167.7L1258.3 199.6M1235.1 298.8L1259.8 283.5M1235.1 298.8L1225.5 262.3M1282.1 269.7L1259.8 283.5M1282.1 269.7L1303.3 256.6M1282.1 269.7L1271.4 233.9M1259.8 283.5L1225.5 262.3M1225.5 262.3L1214.4 227.8M1214.4 227.8L1237.1 212.7M1336.9 235.9L1308.2 211.2M1336.9 235.9L1321.2 245.5M1277.5 188.9L1308.2 211.2M1277.5 188.9L1258.3 199.6M1308.2 211.2L1321.2 245.5M1321.2 245.5L1303.3 256.6M1303.3 256.6L1271.4 233.9M1237.1 212.7L1271.4 233.9M1237.1 212.7L1258.3 199.6M1271.4 233.9L1258.3 199.6M925.7 282.8L959.5 272.4M925.7 282.8L891.8 294.6M925.7 282.8L925.6 315.5M959.5 272.4L993.3 282.8M858.6 307.5L891.8 294.6M858.6 307.5L824.6 322.3M858.6 307.5L857.6 341.7M891.8 294.6L925.6 315.5M959.5 337.4L925.6 315.5M959.5 337.4L925.6 348.8M959.5 337.4L993.4 348.8M959.5 337.4L993.4 315.5M925.6 315.5L925.6 348.8M925.6 348.8L925.3 384.5M925.6 348.8L891.4 362.6M731.3 370.4L761.3 353.5M731.3 370.4L697 391.6M731.3 370.4L726.2 409.7M761.3 353.5L792.1 372.5M761.3 353.5L792.7 337.3M823.9 392.1L792.1 372.5M823.9 392.1L792.3 408.2M823.9 392.1L857.7 413M823.9 392.1L857.3 377.2M792.1 372.5L792.3 408.2M792.1 372.5L792.7 337.3M792.3 408.2L757.1 428.8M792.3 408.2L788.8 448.4M792.7 337.3L824.6 322.3M824.6 322.3L857.6 341.7M959.5 476L925.2 454.8M959.5 476L925.2 490.3M959.5 476L993.8 490.3M959.5 476L993.8 454.8M925.2 454.8L925.2 490.3M925.2 454.8L925.3 419.3M925.2 454.8L891.1 433.7M925.2 490.3L925.2 532.7M925.2 490.3L890.9 511.5M925.3 384.5L925.3 419.3M925.3 384.5L959.5 405.7M925.3 384.5L891.4 362.6M925.3 419.3L959.5 405.7M925.3 419.3L891.1 433.7M959.5 405.7L993.7 419.3M959.5 405.7L993.7 384.5M857.5 448.5L891.1 433.7M857.5 448.5L857.7 413M857.5 448.5L823.2 469.6M857.5 448.5L856.6 490.3M891.1 433.7L857.7 413M857.7 413L857.3 377.2M857.6 341.7L857.3 377.2M857.6 341.7L891.4 362.6M857.3 377.2L891.4 362.6M538.8 532.4L555.7 511.5M538.8 532.4L518 545.3M538.8 532.4L534.8 566.2M555.7 511.5L574.7 532.4M555.7 511.5L574.7 490.6M595.4 552.9L574.7 532.4M595.4 552.9L577.1 573.7M595.4 552.9L619.1 573.7M595.4 552.9L616.7 532.4M574.7 532.4L577.1 573.7M574.7 532.4L574.7 490.6M577.1 573.7L553.7 587.2M577.1 573.7L574.5 607.7M574.7 490.6L595.4 470.1M595.4 470.1L619.1 449.3M595.4 470.1L616.7 490.6M697 631.4L669.6 612.8M697 631.4L674.6 652M697 631.4L731.3 652.6M697 631.4L726.2 613.3M669.6 612.8L674.6 652M669.6 612.8L666.2 572.6M669.6 612.8L643.5 593.5M674.6 652L648.5 668.2M674.6 652L675.8 686.8M664.5 532.4L666.2 572.6M664.5 532.4L690.4 551.8M664.5 532.4L664.5 490.6M664.5 532.4L640 511.5M666.2 572.6L690.4 551.8M666.2 572.6L643.5 593.5M690.4 551.8L722.8 573M690.4 551.8L721.1 532.7M622.6 613.9L643.5 593.5M622.6 613.9L619.1 573.7M622.6 613.9L598 629M622.6 613.9L622.3 648.8M643.5 593.5L619.1 573.7M619.1 573.7L616.7 532.4M669.6 410.2L697 391.6M669.6 410.2L643.5 429.5M669.6 410.2L666.2 450.4M697 391.6L726.2 409.7M619.1 449.3L643.5 429.5M619.1 449.3L616.7 490.6M643.5 429.5L666.2 450.4M690.4 471.2L666.2 450.4M690.4 471.2L664.5 490.6M690.4 471.2L721.1 490.3M690.4 471.2L722.8 450M666.2 450.4L664.5 490.6M664.5 490.6L640 511.5M616.7 532.4L640 511.5M616.7 532.4L616.7 490.6M640 511.5L616.7 490.6M959.5 750.6L925.7 740.2M959.5 750.6L925.7 771.5M959.5 750.6L993.3 771.5M959.5 750.6L993.3 740.2M925.7 740.2L925.7 771.5M925.7 740.2L925.6 707.5M925.7 740.2L891.8 728.4M925.7 771.5L938.6 805.3M925.7 771.5L904.8 794.9M925.6 674.2L925.6 707.5M925.6 674.2L959.5 685.6M925.6 674.2L925.3 638.5M925.6 674.2L891.4 660.4M925.6 707.5L959.5 685.6M925.6 707.5L891.8 728.4M959.5 685.6L993.4 707.5M959.5 685.6L993.4 674.2M858.8 747.8L891.8 728.4M858.8 747.8L858.6 715.5M858.8 747.8L837.7 770.4M858.8 747.8L870.9 783.2M891.8 728.4L858.6 715.5M858.6 715.5L824.6 700.7M858.6 715.5L857.6 681.3M925.2 532.7L925.2 568.2M925.2 532.7L959.5 547M925.2 532.7L890.9 511.5M925.2 568.2L959.5 547M925.2 568.2L891.1 589.3M925.2 568.2L925.3 603.7M959.5 547L993.8 568.2M959.5 547L993.8 532.7M857.7 610L891.1 589.3M857.7 610L857.5 574.5M857.7 610L823.9 630.9M857.7 610L857.3 645.8M891.1 589.3L857.5 574.5M891.1 589.3L925.3 603.7M857.5 574.5L856.6 532.7M857.5 574.5L823.2 553.4M959.5 617.3L925.3 603.7M959.5 617.3L925.3 638.5M959.5 617.3L993.7 638.5M959.5 617.3L993.7 603.7M925.3 603.7L925.3 638.5M925.3 638.5L891.4 660.4M732.1 687.6L761.3 669.5M732.1 687.6L731.3 652.6M732.1 687.6L710.1 708M732.1 687.6L740.2 724.9M761.3 669.5L731.3 652.6M761.3 669.5L792.7 685.7M761.3 669.5L792.1 650.5M731.3 652.6L726.2 613.3M824.6 700.7L792.7 685.7M824.6 700.7L793.9 719.7M824.6 700.7L857.6 681.3M792.7 685.7L793.9 719.7M792.7 685.7L792.1 650.5M793.9 719.7L771.5 741M793.9 719.7L803.5 756M792.3 614.8L792.1 650.5M792.3 614.8L823.9 630.9M792.3 614.8L788.8 574.6M792.3 614.8L757.1 594.2M792.1 650.5L823.9 630.9M823.9 630.9L857.3 645.8M891.4 660.4L857.3 645.8M891.4 660.4L857.6 681.3M857.3 645.8L857.6 681.3M726.2 409.7L722.8 450M726.2 409.7L757.1 428.8M721.1 490.3L722.8 450M721.1 490.3L721.1 532.7M721.1 490.3L753.6 511.5M722.8 450L757.1 428.8M757.1 428.8L788.8 448.4M788.8 448.4L823.2 469.6M788.8 448.4L787.9 490.3M726.2 613.3L757.1 594.2M726.2 613.3L722.8 573M788.8 574.6L757.1 594.2M788.8 574.6L823.2 553.4M788.8 574.6L787.9 532.7M757.1 594.2L722.8 573M722.8 573L721.1 532.7M721.1 532.7L753.6 511.5M890.9 511.5L856.6 490.3M890.9 511.5L856.6 532.7M823.2 469.6L856.6 490.3M823.2 469.6L787.9 490.3M856.6 490.3L856.6 532.7M856.6 532.7L823.2 553.4M823.2 553.4L787.9 532.7M753.6 511.5L787.9 532.7M753.6 511.5L787.9 490.3M787.9 532.7L787.9 490.3M501 545.3L518 545.3M501 545.3L486.1 545.4M501 545.3L499 579.2M518 545.3L534.8 566.2M473.6 545.4L486.1 545.4M473.6 545.4L463.1 545.7M473.6 545.4L472.8 579.6M486.1 545.4L499 579.2M514.9 612.2L499 579.2M514.9 612.2L499.2 612.4M514.9 612.2L533.1 633.3M514.9 612.2L532.9 600.1M499 579.2L499.2 612.4M499.2 612.4L501.6 646.4M499.2 612.4L485.7 613.4M447.6 545.8L450.3 545.8M447.6 545.8L450.6 580.1M450.3 545.8L456.6 579.9M450.3 545.8L455.5 545.7M465.9 613.3L456.6 579.9M465.9 613.3L460.2 613.5M465.9 613.3L478.8 647.1M465.9 613.3L474.5 613.7M456.6 579.9L460.2 613.5M456.6 579.9L455.5 545.7M460.2 613.5L456.9 614.4M460.2 613.5L466.2 647.8M455.5 545.7L463.1 545.7M463.1 545.7L472.8 579.6M534.1 738.9L512.9 709.7M534.1 738.9L521.7 739.7M534.1 738.9L555.9 760.9M534.1 738.9L547.2 730.8M512.9 709.7L521.7 739.7M512.9 709.7L506.2 678.3M512.9 709.7L494.4 678.9M521.7 739.7L534.8 774M521.7 739.7L513.5 744.8M501.6 646.4L506.2 678.3M501.6 646.4L520.3 677.1M501.6 646.4L485.7 613.4M506.2 678.3L520.3 677.1M506.2 678.3L494.4 678.9M520.3 677.1L540.4 699.5M520.3 677.1L535.8 667.5M485.1 678.7L494.4 678.9M485.1 678.7L478.8 647.1M485.1 678.7L479.3 682.2M485.1 678.7L494.9 713.9M494.4 678.9L478.8 647.1M478.8 647.1L474.5 613.7M472.8 579.6L474.5 613.7M472.8 579.6L485.7 613.4M474.5 613.7L485.7 613.4M665.7 932.2L642.3 915.3M665.7 932.2L699.5 953M665.7 932.2L676.1 936.2M642.3 915.3L620.1 896.3M599.7 875.6L620.1 896.3M599.7 875.6L622.5 893.9M599.7 875.6L580.1 851.9M599.7 875.6L577.7 854.3M620.1 896.3L622.5 893.9M622.5 893.9L654 917.3M622.5 893.9L633.6 896.5M534.8 774L547.9 801.4M534.8 774L556 796.4M534.8 774L513.5 744.8M547.9 801.4L556 796.4M547.9 801.4L542.5 804.8M547.9 801.4L563.2 827.5M556 796.4L582.2 822.5M556 796.4L569 795.2M539.7 806.5L542.5 804.8M539.7 806.5L524 780.6M539.7 806.5L557.5 831M542.5 804.8L524 780.6M542.5 804.8L563.2 827.5M524 780.6L508 748.2M524 780.6L505.2 749.9M585.7 848.4L563.2 827.5M585.7 848.4L580.1 851.9M585.7 848.4L614.3 873M585.7 848.4L597.4 848.7M563.2 827.5L580.1 851.9M580.1 851.9L577.7 854.3M577.7 854.3L557.5 831M450.6 580.1L456.9 614.4M456.9 614.4L466.2 647.8M466.2 647.8L479.3 682.2M466.2 647.8L476 683.1M513.5 744.8L494.9 713.9M513.5 744.8L508 748.2M479.3 682.2L494.9 713.9M479.3 682.2L476 683.1M494.9 713.9L508 748.2M508 748.2L505.2 749.9M505.2 749.9L489.1 717.4M489.1 717.4L476 683.1M1253.3 932.2L1242.9 936.2M1253.3 932.2L1219.5 953M1253.3 932.2L1276.7 915.3M1242.9 936.2L1219.5 953M1242.9 936.2L1265 917.3M1242.9 936.2L1231.2 938.1M1219.5 953L1188.2 970M1219.5 953L1198.6 965.9M1285.4 896.5L1265 917.3M1285.4 896.5L1296.5 893.9M1285.4 896.5L1304.7 873M1285.4 896.5L1273.2 896.3M1265 917.3L1296.5 893.9M1265 917.3L1231.2 938.1M1296.5 893.9L1298.9 896.3M1296.5 893.9L1319.3 875.6M1195.8 956.1L1231.2 938.1M1195.8 956.1L1218.4 937.9M1195.8 956.1L1163.5 971.8M1195.8 956.1L1176.4 972M1231.2 938.1L1218.4 937.9M1218.4 937.9L1204 935.2M1218.4 937.9L1239.4 917.2M1350 795.2L1336.8 822.5M1350 795.2L1363 796.4M1350 795.2L1363.1 760.9M1350 795.2L1336.9 787.1M1336.8 822.5L1363 796.4M1336.8 822.5L1308.1 847.1M1336.8 822.5L1321.6 848.7M1363 796.4L1371.1 801.4M1363 796.4L1384.2 774M1277.5 869.4L1308.1 847.1M1277.5 869.4L1293 843.7M1277.5 869.4L1243.7 890.3M1277.5 869.4L1259.2 894.2M1308.1 847.1L1293 843.7M1308.1 847.1L1321.6 848.7M1293 843.7L1308.2 811.8M1293 843.7L1277.5 834.1M1333.3 848.4L1321.6 848.7M1333.3 848.4L1304.7 873M1333.3 848.4L1338.9 851.9M1333.3 848.4L1355.8 827.5M1321.6 848.7L1304.7 873M1304.7 873L1273.2 896.3M1135.6 936.9L1172.9 923.8M1135.6 936.9L1156 915.1M1135.6 936.9L1100.6 949.3M1135.6 936.9L1117.5 958.1M1172.9 923.8L1156 915.1M1172.9 923.8L1189 930.6M1172.9 923.8L1209.2 908.2M1156 915.1L1134.8 902M1156 915.1L1172.2 888.9M1204 935.2L1189 930.6M1204 935.2L1167.7 950.7M1204 935.2L1239.4 917.2M1189 930.6L1167.7 950.7M1189 930.6L1209.2 908.2M1167.7 950.7L1133.7 964.8M1167.7 950.7L1148.7 969.4M1227.8 883.9L1209.2 908.2M1227.8 883.9L1243.7 890.3M1227.8 883.9L1243.2 855.3M1227.8 883.9L1208.7 873.2M1209.2 908.2L1243.7 890.3M1243.7 890.3L1259.2 894.2M1273.2 896.3L1259.2 894.2M1273.2 896.3L1239.4 917.2M1259.2 894.2L1239.4 917.2M1380.2 532.4L1384.2 566.2M1380.2 532.4L1401 545.3M1380.2 532.4L1363.3 511.5M1384.2 566.2L1401 545.3M1384.2 566.2L1365.3 587.2M1384.2 566.2L1386.1 600.1M1401 545.3L1418 545.3M1401 545.3L1413.9 511.5M1344.5 607.7L1365.3 587.2M1344.5 607.7L1341.9 573.7M1344.5 607.7L1321 629M1344.5 607.7L1344.3 642.5M1365.3 587.2L1341.9 573.7M1365.3 587.2L1386.1 600.1M1341.9 573.7L1344.3 532.4M1341.9 573.7L1323.6 552.9M1404.1 612.2L1386.1 600.1M1404.1 612.2L1385.9 633.3M1404.1 612.2L1419.8 612.4M1404.1 612.2L1420 579.2M1386.1 600.1L1385.9 633.3M1385.9 633.3L1383.2 667.5M1385.9 633.3L1365.2 655.4M1243.2 686.8L1270.5 668.2M1243.2 686.8L1244.4 652M1243.2 686.8L1208.9 708M1243.2 686.8L1235.1 724.2M1270.5 668.2L1244.4 652M1270.5 668.2L1295.1 683.4M1270.5 668.2L1296.7 648.8M1244.4 652L1249.4 612.8M1244.4 652L1222 631.4M1317.4 697.2L1295.1 683.4M1317.4 697.2L1291.7 716.8M1317.4 697.2L1338.3 710.1M1317.4 697.2L1342.2 676.9M1295.1 683.4L1291.7 716.8M1295.1 683.4L1296.7 648.8M1291.7 716.8L1259.8 739.5M1291.7 716.8L1282.1 753.3M1296.4 613.9L1296.7 648.8M1296.4 613.9L1321 629M1296.4 613.9L1299.9 573.7M1296.4 613.9L1275.5 593.5M1296.7 648.8L1321 629M1321 629L1344.3 642.5M1384.9 738.9L1371.8 730.8M1384.9 738.9L1363.1 760.9M1384.9 738.9L1397.3 739.7M1384.9 738.9L1406.1 709.7M1371.8 730.8L1363.1 760.9M1371.8 730.8L1378.6 699.5M1371.8 730.8L1356.2 721.2M1363.1 760.9L1336.9 787.1M1383.2 667.5L1378.6 699.5M1383.2 667.5L1398.7 677.1M1383.2 667.5L1365.2 655.4M1378.6 699.5L1398.7 677.1M1378.6 699.5L1356.2 721.2M1398.7 677.1L1412.8 678.3M1398.7 677.1L1417.4 646.4M1331.9 741.7L1356.2 721.2M1331.9 741.7L1338.3 710.1M1331.9 741.7L1303.3 766.4M1331.9 741.7L1321.2 777.5M1356.2 721.2L1338.3 710.1M1338.3 710.1L1342.2 676.9M1344.3 642.5L1342.2 676.9M1344.3 642.5L1365.2 655.4M1342.2 676.9L1365.2 655.4M980.4 805.3L1014.2 794.9M980.4 805.3L993.3 771.5M980.4 805.3L938.6 805.3M980.4 805.3L959.5 828.7M1014.2 794.9L993.3 771.5M1014.2 794.9L1035.2 817M1014.2 794.9L1048.1 783.2M993.3 771.5L993.3 740.2M1055.7 837.4L1035.2 817M1055.7 837.4L1021.7 848.5M1055.7 837.4L1077 856.7M1055.7 837.4L1090.5 825.2M1035.2 817L1021.7 848.5M1035.2 817L1048.1 783.2M1021.7 848.5L980.4 850.9M1021.7 848.5L1000.9 871.3M1060.2 747.8L1048.1 783.2M1060.2 747.8L1081.3 770.4M1060.2 747.8L1060.4 715.5M1060.2 747.8L1027.2 728.4M1048.1 783.2L1081.3 770.4M1081.3 770.4L1115.5 756M1081.3 770.4L1103.4 791.4M1134.8 902L1116.2 888.8M1134.8 902L1100 915M1134.8 902L1172.2 888.9M1116.2 888.8L1100 915M1116.2 888.8L1131.4 860.1M1116.2 888.8L1096.8 873.6M1100 915L1060.8 923.1M1100 915L1079.4 936.2M1145.2 829.5L1131.4 860.1M1145.2 829.5L1164.8 845M1145.2 829.5L1158.1 795.7M1145.2 829.5L1124.9 811.2M1131.4 860.1L1164.8 845M1131.4 860.1L1096.8 873.6M1164.8 845L1187.5 860.2M1164.8 845L1201.3 829.5M1061.9 885.3L1096.8 873.6M1061.9 885.3L1077 856.7M1061.9 885.3L1021.7 890.9M1061.9 885.3L1041.5 907.8M1096.8 873.6L1077 856.7M1077 856.7L1090.5 825.2M1186.9 687.6L1178.8 724.9M1186.9 687.6L1208.9 708M1186.9 687.6L1187.7 652.6M1186.9 687.6L1157.7 669.5M1178.8 724.9L1208.9 708M1178.8 724.9L1147.5 741M1178.8 724.9L1169.2 761.2M1208.9 708L1235.1 724.2M1115.5 756L1147.5 741M1115.5 756L1125.1 719.7M1115.5 756L1103.4 791.4M1147.5 741L1125.1 719.7M1147.5 741L1169.2 761.2M1125.1 719.7L1126.3 685.7M1125.1 719.7L1094.4 700.7M1189.7 779.8L1169.2 761.2M1189.7 779.8L1158.1 795.7M1189.7 779.8L1214.4 795.2M1189.7 779.8L1225.5 760.7M1169.2 761.2L1158.1 795.7M1158.1 795.7L1124.9 811.2M1090.5 825.2L1124.9 811.2M1090.5 825.2L1103.4 791.4M1124.9 811.2L1103.4 791.4M1336.9 787.1L1321.2 777.5M1336.9 787.1L1308.2 811.8M1303.3 766.4L1321.2 777.5M1303.3 766.4L1282.1 753.3M1303.3 766.4L1271.4 789.1M1321.2 777.5L1308.2 811.8M1308.2 811.8L1277.5 834.1M1277.5 834.1L1243.2 855.3M1277.5 834.1L1258.3 823.4M1235.1 724.2L1225.5 760.7M1235.1 724.2L1259.8 739.5M1214.4 795.2L1225.5 760.7M1214.4 795.2L1201.3 829.5M1214.4 795.2L1237.1 810.3M1225.5 760.7L1259.8 739.5M1259.8 739.5L1282.1 753.3M1282.1 753.3L1271.4 789.1M1172.2 888.9L1208.7 873.2M1172.2 888.9L1187.5 860.2M1243.2 855.3L1208.7 873.2M1243.2 855.3L1258.3 823.4M1208.7 873.2L1187.5 860.2M1187.5 860.2L1201.3 829.5M1201.3 829.5L1237.1 810.3M1271.4 789.1L1237.1 810.3M1271.4 789.1L1258.3 823.4M1237.1 810.3L1258.3 823.4M1188.2 970L1198.6 965.9M1188.2 970L1176.4 972M1188.2 970L1155.5 984.9M1163.5 971.8L1176.4 972M1163.5 971.8L1148.7 969.4M1163.5 971.8L1129.3 985.3M1176.4 972L1155.5 984.9M1133.6 994.6L1155.5 984.9M1133.6 994.6L1122.2 997.4M1155.5 984.9L1122.2 997.4M1122.2 997.4L1086.5 1007.9M1122.2 997.4L1108.4 998.2M1100.6 949.3L1117.5 958.1M1100.6 949.3L1079.4 936.2M1100.6 949.3L1061.3 957.5M1117.5 958.1L1098.5 976.6M1117.5 958.1L1133.7 964.8M1078.9 992.2L1098.5 976.6M1078.9 992.2L1062.8 985.9M1078.9 992.2L1058 1005.1M1078.9 992.2L1093.8 996.5M1098.5 976.6L1062.8 985.9M1098.5 976.6L1133.7 964.8M1062.8 985.9L1042.2 976.1M1062.8 985.9L1022.6 991.7M1133.7 964.8L1148.7 969.4M1148.7 969.4L1129.3 985.3M995 1023.8L1016.2 1020.7M995 1023.8L980.7 1023.4M1016.2 1020.7L980.7 1023.4M1016.2 1020.7L1051.7 1015.5M1016.2 1020.7L1037.3 1014.4M980.7 1023.4L938.3 1023.4M980.7 1023.4L959.5 1020.4M1086.5 1007.9L1051.7 1015.5M1086.5 1007.9L1065.3 1014M1086.5 1007.9L1108.4 998.2M1051.7 1015.5L1065.3 1014M1051.7 1015.5L1037.3 1014.4M1022.5 1010.8L1037.3 1014.4M1022.5 1010.8L1058 1005.1M1022.5 1010.8L1001.4 1004.8M1022.5 1010.8L980.7 1014.1M1037.3 1014.4L1058 1005.1M1058 1005.1L1093.8 996.5M1129.3 985.3L1093.8 996.5M1129.3 985.3L1108.4 998.2M1093.8 996.5L1108.4 998.2M938.6 805.3L959.5 828.7M938.6 805.3L904.8 794.9M959.5 828.7L938.6 850.9M959.5 828.7L980.4 850.9M918.1 871.3L938.6 850.9M918.1 871.3L897.3 848.5M918.1 871.3L897.3 890.9M918.1 871.3L938.6 893.3M938.6 850.9L897.3 848.5M938.6 850.9L980.4 850.9M897.3 848.5L883.8 817M897.3 848.5L863.3 837.4M980.4 850.9L1000.9 871.3M1000.9 871.3L1021.7 890.9M1000.9 871.3L980.4 893.3M839.6 936.2L858.2 923.1M839.6 936.2L819 915M839.6 936.2L818.4 949.3M839.6 936.2L857.7 957.5M858.2 923.1L819 915M858.2 923.1L898.4 928.5M858.2 923.1L877.5 907.8M819 915L802.8 888.8M819 915L784.2 902M938.6 931.3L898.4 928.5M938.6 931.3L919.2 947M938.6 931.3L980.4 931.3M938.6 931.3L959.5 913.5M898.4 928.5L919.2 947M898.4 928.5L877.5 907.8M919.2 947L898 963M919.2 947L938.3 965.8M857.1 885.3L877.5 907.8M857.1 885.3L897.3 890.9M857.1 885.3L842 856.7M857.1 885.3L822.2 873.6M877.5 907.8L897.3 890.9M897.3 890.9L938.6 893.3M1060.8 923.1L1079.4 936.2M1060.8 923.1L1041.5 907.8M1060.8 923.1L1020.6 928.5M1079.4 936.2L1061.3 957.5M1021.7 890.9L1041.5 907.8M1021.7 890.9L980.4 893.3M1041.5 907.8L1020.6 928.5M999.8 947L1020.6 928.5M999.8 947L980.4 931.3M999.8 947L980.7 965.8M999.8 947L1021 963M1020.6 928.5L980.4 931.3M980.4 931.3L959.5 913.5M938.6 893.3L959.5 913.5M938.6 893.3L980.4 893.3M959.5 913.5L980.4 893.3M720.4 965.9L730.8 970M720.4 965.9L699.5 953M730.8 970L699.5 953M730.8 970L763.5 984.9M730.8 970L742.6 972M699.5 953L676.1 936.2M796.8 997.4L763.5 984.9M796.8 997.4L785.4 994.6M796.8 997.4L832.5 1007.9M796.8 997.4L810.6 998.2M763.5 984.9L785.4 994.6M763.5 984.9L742.6 972M723.2 956.1L742.6 972M723.2 956.1L755.5 971.8M723.2 956.1L700.6 937.9M723.2 956.1L687.8 938.1M742.6 972L755.5 971.8M755.5 971.8L770.3 969.4M755.5 971.8L789.7 985.3M938.3 1023.4L902.8 1020.7M938.3 1023.4L924 1023.8M938.3 1023.4L959.5 1020.4M902.8 1020.7L924 1023.8M902.8 1020.7L881.7 1014.4M902.8 1020.7L867.3 1015.5M861 1005.1L881.7 1014.4M861 1005.1L896.5 1010.8M861 1005.1L840.1 992.2M861 1005.1L825.2 996.5M881.7 1014.4L896.5 1010.8M881.7 1014.4L867.3 1015.5M896.5 1010.8L938.3 1014.1M896.5 1010.8L917.6 1004.8M853.7 1014L867.3 1015.5M853.7 1014L832.5 1007.9M867.3 1015.5L832.5 1007.9M832.5 1007.9L810.6 998.2M783.4 936.9L801.5 958.1M783.4 936.9L818.4 949.3M783.4 936.9L763 915.1M783.4 936.9L746.1 923.8M801.5 958.1L818.4 949.3M801.5 958.1L785.3 964.8M801.5 958.1L820.5 976.6M818.4 949.3L857.7 957.5M770.3 969.4L785.3 964.8M770.3 969.4L751.3 950.7M770.3 969.4L789.7 985.3M785.3 964.8L751.3 950.7M785.3 964.8L820.5 976.6M751.3 950.7L730 930.6M751.3 950.7L715 935.2M856.2 985.9L820.5 976.6M856.2 985.9L840.1 992.2M856.2 985.9L896.4 991.7M856.2 985.9L876.8 976.1M820.5 976.6L840.1 992.2M840.1 992.2L825.2 996.5M810.6 998.2L825.2 996.5M810.6 998.2L789.7 985.3M825.2 996.5L789.7 985.3M1061.3 957.5L1021 963M1061.3 957.5L1042.2 976.1M980.7 965.8L1021 963M980.7 965.8L938.3 965.8M980.7 965.8L959.5 981.9M1021 963L1042.2 976.1M1042.2 976.1L1022.6 991.7M1022.6 991.7L1001.4 1004.8M1022.6 991.7L980.7 995M857.7 957.5L876.8 976.1M857.7 957.5L898 963M896.4 991.7L876.8 976.1M896.4 991.7L917.6 1004.8M896.4 991.7L938.3 995M876.8 976.1L898 963M898 963L938.3 965.8M938.3 965.8L959.5 981.9M959.5 1020.4L980.7 1014.1M959.5 1020.4L938.3 1014.1M1001.4 1004.8L980.7 1014.1M1001.4 1004.8L980.7 995M980.7 1014.1L938.3 1014.1M938.3 1014.1L917.6 1004.8M917.6 1004.8L938.3 995M959.5 981.9L938.3 995M959.5 981.9L980.7 995M938.3 995L980.7 995M1276.7 915.3L1298.9 896.3M1298.9 896.3L1319.3 875.6M1319.3 875.6L1338.9 851.9M1319.3 875.6L1341.3 854.3M1371.1 801.4L1384.2 774M1371.1 801.4L1355.8 827.5M1371.1 801.4L1376.5 804.8M1384.2 774L1397.3 739.7M1384.2 774L1405.5 744.8M1338.9 851.9L1355.8 827.5M1338.9 851.9L1341.3 854.3M1355.8 827.5L1376.5 804.8M1395 780.6L1376.5 804.8M1395 780.6L1379.3 806.5M1395 780.6L1413.8 749.9M1395 780.6L1411 748.2M1376.5 804.8L1379.3 806.5M1379.3 806.5L1361.5 831M1361.5 831L1341.3 854.3M1418 545.3L1413.9 511.5M1418 545.3L1420 579.2M1418 545.3L1432.9 545.4M1413.9 511.5L1418 477.7M1419.8 612.4L1420 579.2M1419.8 612.4L1417.4 646.4M1419.8 612.4L1433.3 613.4M1420 579.2L1432.9 545.4M1442.6 511.5L1432.9 545.4M1442.6 511.5L1445.4 545.4M1442.6 511.5L1445.4 477.6M1442.6 511.5L1432.9 477.6M1432.9 545.4L1445.4 545.4M1445.4 545.4L1455.9 545.7M1445.4 545.4L1446.2 579.6M1397.3 739.7L1406.1 709.7M1397.3 739.7L1405.5 744.8M1406.1 709.7L1424.6 678.9M1406.1 709.7L1412.8 678.3M1440.2 647.1L1424.6 678.9M1440.2 647.1L1433.9 678.7M1440.2 647.1L1453.1 613.3M1440.2 647.1L1444.5 613.7M1424.6 678.9L1433.9 678.7M1424.6 678.9L1412.8 678.3M1433.9 678.7L1424.1 713.9M1433.9 678.7L1439.7 682.2M1412.8 678.3L1417.4 646.4M1417.4 646.4L1433.3 613.4M1471.8 511.5L1468.7 545.8M1471.8 511.5L1471.4 545.8M1471.8 511.5L1471.4 477.2M1471.8 511.5L1468.7 477.2M1468.7 545.8L1471.4 545.8M1468.7 545.8L1463.5 545.7M1468.7 545.8L1462.4 579.9M1471.4 545.8L1468.4 580.1M1455.9 545.7L1463.5 545.7M1455.9 545.7L1462 511.5M1455.9 545.7L1446.2 579.6M1463.5 545.7L1462 511.5M1463.5 545.7L1462.4 579.9M1462 511.5L1463.5 477.3M1462 511.5L1455.9 477.3M1458.8 613.5L1462.4 579.9M1458.8 613.5L1453.1 613.3M1458.8 613.5L1452.8 647.8M1458.8 613.5L1462.1 614.4M1462.4 579.9L1453.1 613.3M1453.1 613.3L1444.5 613.7M1433.3 613.4L1444.5 613.7M1433.3 613.4L1446.2 579.6M1444.5 613.7L1446.2 579.6M1468.4 580.1L1462.1 614.4M1452.8 647.8L1462.1 614.4M1452.8 647.8L1439.7 682.2M1452.8 647.8L1443 683.1M1405.5 744.8L1411 748.2M1405.5 744.8L1424.1 713.9M1413.8 749.9L1411 748.2M1413.8 749.9L1429.9 717.4M1411 748.2L1424.1 713.9M1424.1 713.9L1439.7 682.2M1439.7 682.2L1443 683.1M1443 683.1L1429.9 717.4M993.3 740.2L1027.2 728.4M993.3 740.2L993.4 707.5M1060.4 715.5L1027.2 728.4M1060.4 715.5L1094.4 700.7M1060.4 715.5L1061.4 681.3M1027.2 728.4L993.4 707.5M993.4 707.5L993.4 674.2M993.4 674.2L993.7 638.5M993.4 674.2L1027.6 660.4M1187.7 652.6L1157.7 669.5M1187.7 652.6L1222 631.4M1187.7 652.6L1192.8 613.3M1157.7 669.5L1126.9 650.5M1157.7 669.5L1126.3 685.7M1095.1 630.9L1126.9 650.5M1095.1 630.9L1126.7 614.8M1095.1 630.9L1061.3 610M1095.1 630.9L1061.7 645.8M1126.9 650.5L1126.7 614.8M1126.9 650.5L1126.3 685.7M1126.7 614.8L1161.9 594.2M1126.7 614.8L1130.2 574.6M1126.3 685.7L1094.4 700.7M1094.4 700.7L1061.4 681.3M993.8 568.2L993.8 532.7M993.8 568.2L993.7 603.7M993.8 568.2L1027.9 589.3M993.8 532.7L993.8 490.3M993.8 532.7L1028.1 511.5M993.7 638.5L993.7 603.7M993.7 638.5L1027.6 660.4M993.7 603.7L1027.9 589.3M1061.5 574.5L1027.9 589.3M1061.5 574.5L1061.3 610M1061.5 574.5L1095.8 553.4M1061.5 574.5L1062.4 532.7M1027.9 589.3L1061.3 610M1061.3 610L1061.7 645.8M1061.4 681.3L1061.7 645.8M1061.4 681.3L1027.6 660.4M1061.7 645.8L1027.6 660.4M1363.3 511.5L1344.3 490.6M1363.3 511.5L1344.3 532.4M1323.6 470.1L1344.3 490.6M1323.6 470.1L1299.9 449.3M1323.6 470.1L1302.3 490.6M1344.3 490.6L1344.3 532.4M1344.3 532.4L1323.6 552.9M1323.6 552.9L1299.9 573.7M1323.6 552.9L1302.3 532.4M1222 391.6L1249.4 410.2M1222 391.6L1187.7 370.4M1222 391.6L1192.8 409.7M1249.4 410.2L1252.8 450.4M1249.4 410.2L1275.5 429.5M1254.5 490.6L1252.8 450.4M1254.5 490.6L1228.6 471.2M1254.5 490.6L1254.5 532.4M1254.5 490.6L1279 511.5M1252.8 450.4L1228.6 471.2M1252.8 450.4L1275.5 429.5M1228.6 471.2L1196.2 450M1228.6 471.2L1197.9 490.3M1275.5 429.5L1299.9 449.3M1299.9 449.3L1302.3 490.6M1249.4 612.8L1222 631.4M1249.4 612.8L1275.5 593.5M1249.4 612.8L1252.8 572.6M1222 631.4L1192.8 613.3M1299.9 573.7L1275.5 593.5M1299.9 573.7L1302.3 532.4M1275.5 593.5L1252.8 572.6M1228.6 551.8L1252.8 572.6M1228.6 551.8L1254.5 532.4M1228.6 551.8L1197.9 532.7M1228.6 551.8L1196.2 573M1252.8 572.6L1254.5 532.4M1254.5 532.4L1279 511.5M1302.3 490.6L1279 511.5M1302.3 490.6L1302.3 532.4M1279 511.5L1302.3 532.4M993.3 282.8L993.4 315.5M993.3 282.8L1027.2 294.6M993.4 348.8L993.4 315.5M993.4 348.8L993.7 384.5M993.4 348.8L1027.6 362.6M993.4 315.5L1027.2 294.6M1027.2 294.6L1060.4 307.5M1060.4 307.5L1094.4 322.3M1060.4 307.5L1061.4 341.7M993.8 490.3L993.8 454.8M993.8 490.3L1028.1 511.5M993.8 454.8L1027.9 433.7M993.8 454.8L993.7 419.3M1061.3 413L1027.9 433.7M1061.3 413L1061.5 448.5M1061.3 413L1095.1 392.1M1061.3 413L1061.7 377.2M1027.9 433.7L1061.5 448.5M1027.9 433.7L993.7 419.3M1061.5 448.5L1062.4 490.3M1061.5 448.5L1095.8 469.6M993.7 419.3L993.7 384.5M993.7 384.5L1027.6 362.6M1157.7 353.5L1187.7 370.4M1157.7 353.5L1126.3 337.3M1157.7 353.5L1126.9 372.5M1187.7 370.4L1192.8 409.7M1094.4 322.3L1126.3 337.3M1094.4 322.3L1061.4 341.7M1126.3 337.3L1126.9 372.5M1126.7 408.2L1126.9 372.5M1126.7 408.2L1095.1 392.1M1126.7 408.2L1130.2 448.4M1126.7 408.2L1161.9 428.8M1126.9 372.5L1095.1 392.1M1095.1 392.1L1061.7 377.2M1027.6 362.6L1061.7 377.2M1027.6 362.6L1061.4 341.7M1061.7 377.2L1061.4 341.7M1192.8 613.3L1196.2 573M1192.8 613.3L1161.9 594.2M1197.9 532.7L1196.2 573M1197.9 532.7L1197.9 490.3M1197.9 532.7L1165.4 511.5M1196.2 573L1161.9 594.2M1161.9 594.2L1130.2 574.6M1130.2 574.6L1095.8 553.4M1130.2 574.6L1131.1 532.7M1192.8 409.7L1161.9 428.8M1192.8 409.7L1196.2 450M1130.2 448.4L1161.9 428.8M1130.2 448.4L1095.8 469.6M1130.2 448.4L1131.1 490.3M1161.9 428.8L1196.2 450M1196.2 450L1197.9 490.3M1197.9 490.3L1165.4 511.5M1028.1 511.5L1062.4 532.7M1028.1 511.5L1062.4 490.3M1095.8 553.4L1062.4 532.7M1095.8 553.4L1131.1 532.7M1062.4 532.7L1062.4 490.3M1062.4 490.3L1095.8 469.6M1095.8 469.6L1131.1 490.3M1165.4 511.5L1131.1 490.3M1165.4 511.5L1131.1 532.7M1131.1 490.3L1131.1 532.7M676.1 936.2L687.8 938.1M676.1 936.2L654 917.3M700.6 937.9L687.8 938.1M700.6 937.9L715 935.2M700.6 937.9L679.6 917.2M687.8 938.1L654 917.3M654 917.3L633.6 896.5M633.6 896.5L614.3 873M633.6 896.5L645.8 896.3M763 915.1L746.1 923.8M763 915.1L784.2 902M763 915.1L746.8 888.9M746.1 923.8L709.8 908.2M746.1 923.8L730 930.6M675.3 890.3L709.8 908.2M675.3 890.3L691.2 883.9M675.3 890.3L641.5 869.4M675.3 890.3L659.8 894.2M709.8 908.2L691.2 883.9M709.8 908.2L730 930.6M691.2 883.9L710.3 873.2M691.2 883.9L675.8 855.3M730 930.6L715 935.2M715 935.2L679.6 917.2M582.2 822.5L569 795.2M582.2 822.5L597.4 848.7M582.2 822.5L610.9 847.1M569 795.2L555.9 760.9M569 795.2L582.1 787.1M614.3 873L597.4 848.7M614.3 873L645.8 896.3M597.4 848.7L610.9 847.1M626 843.7L610.9 847.1M626 843.7L641.5 869.4M626 843.7L641.5 834.1M626 843.7L610.8 811.8M610.9 847.1L641.5 869.4M641.5 869.4L659.8 894.2M679.6 917.2L659.8 894.2M679.6 917.2L645.8 896.3M659.8 894.2L645.8 896.3M904.8 794.9L870.9 783.2M904.8 794.9L883.8 817M837.7 770.4L870.9 783.2M837.7 770.4L803.5 756M837.7 770.4L815.6 791.4M870.9 783.2L883.8 817M883.8 817L863.3 837.4M863.3 837.4L842 856.7M863.3 837.4L828.5 825.2M710.1 708L740.2 724.9M710.1 708L675.8 686.8M710.1 708L683.9 724.2M740.2 724.9L749.8 761.2M740.2 724.9L771.5 741M760.9 795.7L749.8 761.2M760.9 795.7L729.3 779.8M760.9 795.7L773.8 829.5M760.9 795.7L794.1 811.2M749.8 761.2L729.3 779.8M749.8 761.2L771.5 741M729.3 779.8L693.5 760.7M729.3 779.8L704.6 795.2M771.5 741L803.5 756M803.5 756L815.6 791.4M802.8 888.8L784.2 902M802.8 888.8L822.2 873.6M802.8 888.8L787.6 860.1M784.2 902L746.8 888.9M842 856.7L822.2 873.6M842 856.7L828.5 825.2M822.2 873.6L787.6 860.1M754.2 845L787.6 860.1M754.2 845L773.8 829.5M754.2 845L717.7 829.5M754.2 845L731.5 860.2M787.6 860.1L773.8 829.5M773.8 829.5L794.1 811.2M815.6 791.4L794.1 811.2M815.6 791.4L828.5 825.2M794.1 811.2L828.5 825.2M534.8 566.2L532.9 600.1M534.8 566.2L553.7 587.2M533.1 633.3L532.9 600.1M533.1 633.3L535.8 667.5M533.1 633.3L553.8 655.4M532.9 600.1L553.7 587.2M553.7 587.2L574.5 607.7M574.5 607.7L598 629M574.5 607.7L574.7 642.5M555.9 760.9L547.2 730.8M555.9 760.9L582.1 787.1M547.2 730.8L562.8 721.2M547.2 730.8L540.4 699.5M580.7 710.1L562.8 721.2M580.7 710.1L587.1 741.7M580.7 710.1L601.6 697.2M580.7 710.1L576.8 676.9M562.8 721.2L587.1 741.7M562.8 721.2L540.4 699.5M587.1 741.7L597.8 777.5M587.1 741.7L615.7 766.4M540.4 699.5L535.8 667.5M535.8 667.5L553.8 655.4M648.5 668.2L675.8 686.8M648.5 668.2L622.3 648.8M648.5 668.2L623.9 683.4M675.8 686.8L683.9 724.2M598 629L622.3 648.8M598 629L574.7 642.5M622.3 648.8L623.9 683.4M627.3 716.8L623.9 683.4M627.3 716.8L601.6 697.2M627.3 716.8L636.9 753.3M627.3 716.8L659.2 739.5M623.9 683.4L601.6 697.2M601.6 697.2L576.8 676.9M553.8 655.4L576.8 676.9M553.8 655.4L574.7 642.5M576.8 676.9L574.7 642.5M746.8 888.9L731.5 860.2M746.8 888.9L710.3 873.2M717.7 829.5L731.5 860.2M717.7 829.5L704.6 795.2M717.7 829.5L681.9 810.3M731.5 860.2L710.3 873.2M710.3 873.2L675.8 855.3M675.8 855.3L641.5 834.1M675.8 855.3L660.7 823.4M683.9 724.2L659.2 739.5M683.9 724.2L693.5 760.7M636.9 753.3L659.2 739.5M636.9 753.3L615.7 766.4M636.9 753.3L647.6 789.1M659.2 739.5L693.5 760.7M693.5 760.7L704.6 795.2M704.6 795.2L681.9 810.3M582.1 787.1L610.8 811.8M582.1 787.1L597.8 777.5M641.5 834.1L610.8 811.8M641.5 834.1L660.7 823.4M610.8 811.8L597.8 777.5M597.8 777.5L615.7 766.4M615.7 766.4L647.6 789.1M681.9 810.3L647.6 789.1M681.9 810.3L660.7 823.4M647.6 789.1L660.7 823.4M1418 477.7L1432.9 477.6M1418 477.7L1420 443.8M1445.4 477.6L1432.9 477.6M1445.4 477.6L1455.9 477.3M1445.4 477.6L1446.2 443.4M1432.9 477.6L1420 443.8M1420 443.8L1419.8 410.6M1419.8 410.6L1417.4 376.6M1419.8 410.6L1433.3 409.6M1471.4 477.2L1468.7 477.2M1471.4 477.2L1468.4 442.9M1468.7 477.2L1462.4 443.1M1468.7 477.2L1463.5 477.3M1453.1 409.7L1462.4 443.1M1453.1 409.7L1458.8 409.5M1453.1 409.7L1440.2 375.9M1453.1 409.7L1444.5 409.3M1462.4 443.1L1458.8 409.5M1462.4 443.1L1463.5 477.3M1458.8 409.5L1462.1 408.6M1458.8 409.5L1452.8 375.2M1463.5 477.3L1455.9 477.3M1455.9 477.3L1446.2 443.4M1406.1 313.3L1397.3 283.3M1406.1 313.3L1412.8 344.7M1406.1 313.3L1424.6 344.1M1397.3 283.3L1384.2 249M1397.3 283.3L1405.5 278.2M1417.4 376.6L1412.8 344.7M1417.4 376.6L1433.3 409.6M1412.8 344.7L1424.6 344.1M1433.9 344.3L1424.6 344.1M1433.9 344.3L1440.2 375.9M1433.9 344.3L1439.7 340.8M1433.9 344.3L1424.1 309.1M1424.6 344.1L1440.2 375.9M1440.2 375.9L1444.5 409.3M1446.2 443.4L1444.5 409.3M1446.2 443.4L1433.3 409.6M1444.5 409.3L1433.3 409.6M1276.7 107.7L1298.9 126.7M1319.3 147.4L1298.9 126.7M1319.3 147.4L1338.9 171.1M1319.3 147.4L1341.3 168.7M1384.2 249L1371.1 221.6M1384.2 249L1405.5 278.2M1371.1 221.6L1376.5 218.2M1371.1 221.6L1355.8 195.5M1379.3 216.5L1376.5 218.2M1379.3 216.5L1395 242.4M1379.3 216.5L1361.5 192M1376.5 218.2L1395 242.4M1376.5 218.2L1355.8 195.5M1395 242.4L1411 274.8M1395 242.4L1413.8 273.1M1355.8 195.5L1338.9 171.1M1338.9 171.1L1341.3 168.7M1341.3 168.7L1361.5 192M1468.4 442.9L1462.1 408.6M1462.1 408.6L1452.8 375.2M1452.8 375.2L1439.7 340.8M1452.8 375.2L1443 339.9M1405.5 278.2L1424.1 309.1M1405.5 278.2L1411 274.8M1439.7 340.8L1424.1 309.1M1439.7 340.8L1443 339.9M1424.1 309.1L1411 274.8M1411 274.8L1413.8 273.1M1413.8 273.1L1429.9 305.6M1429.9 305.6L1443 339.9" stroke="#fff" stroke-width="1" fill="none" shape-rendering="crispEdges"/></svg>
<div class="r" style="left:0px;top:0px;width:1919px;height:16px;background:rgba(0,52,52,0.31)"></div>
<div class="r" style="left:0px;top:16px;width:1919px;height:2px;background:#22d6d6"></div>
<div class="r" style="left:1917px;top:0px;width:1px;height:16px;background:#757575"></div>
<div class="r" style="left:1918px;top:0px;width:1px;height:18px;background:#22d6d6"></div>
<div class="r" style="left:9px;top:8px;width:473px;height:315px;background:rgba(10,10,10,0.29);border-radius:4px"></div>
<div class="r" style="left:17px;top:16px;width:300px;height:60px;background:rgba(104,173,173,0.245);border-radius:3px"></div>
<div class="t" style="left:321px;top:22px">FPS (avg: 61.130)</div>
<div class="r" style="left:17px;top:80px;width:300px;height:60px;background:rgba(104,173,173,0.245);border-radius:3px"></div>
<div class="t" style="left:321px;top:86px">Swap-Time (avg: 0.274)</div>
<div class="r" style="left:17px;top:144px;width:300px;height:60px;background:rgba(104,173,173,0.245);border-radius:3px"></div>
<div class="t" style="left:321px;top:150px">Draw-Time (avg: 0.604)</div>
<div class="r" style="left:17px;top:208px;width:300px;height:60px;background:rgba(104,173,173,0.245);border-radius:3px"></div>
<div class="t" style="left:321px;top:214px">Sim-Time (avg: 0.705)</div>
<div class="r" style="left:17px;top:272px;width:300px;height:20px;background:rgba(104,173,173,0.245);border-radius:3px"></div>
<div class="t" style="left:321px;top:278px">User Val</div>
<svg class="r" style="left:0;top:0" width="330" height="300"><polyline points="21.5,56.5 24.4,57.5 27.4,56.5 30.3,57.5 33.3,57.5 36.2,56.5 39.2,56.5 42.1,57.5 45.1,56.5 48.0,56.5 50.9,57.5 53.9,57.5 56.8,57.5 59.8,57.5 62.7,57.5 65.7,56.5 68.6,57.5 71.6,57.5 74.5,57.5 77.4,57.5 80.4,57.5 83.3,56.5 86.3,57.5 89.2,57.5 92.2,56.5 95.1,56.5 98.1,57.5 101.0,57.5 103.9,57.5 106.9,57.5 109.8,57.5 112.8,57.5 115.7,56.5 118.7,57.5 121.6,57.5 124.6,57.5 127.5,57.5 130.4,56.5 133.4,56.5 136.3,56.5 139.3,57.5 142.2,57.5 145.2,57.5 148.1,56.5 151.1,57.5 154.0,56.5 156.9,56.5 159.9,57.5 162.8,57.5 165.8,57.5 168.7,57.5 171.7,57.5 174.6,57.5 177.6,57.5 180.5,57.5 183.4,56.5 186.4,57.5 189.3,57.5 192.3,57.5 195.2,57.5 198.2,57.5 201.1,56.5 204.1,57.5 207.0,57.5 209.9,56.5 212.9,56.5 215.8,57.5 218.8,57.5 221.7,56.5 224.7,57.5 227.6,57.5 230.6,56.5 233.5,56.5 236.4,57.5 239.4,57.5 242.3,56.5 245.3,57.5 248.2,56.5 251.2,57.5 254.1,56.5 257.1,57.5 260.0,57.5 262.9,57.5 265.9,57.5 268.8,56.5 271.8,56.5 274.7,57.5 277.7,56.5 280.6,56.5 283.6,57.5 286.5,57.5 289.4,56.5 292.4,56.5 295.3,57.5 298.3,56.5 301.2,57.5 304.2,57.5 307.1,56.5 310.1,57.5 313.0,57.5" fill="none" stroke="#00ffff" stroke-width="1"/></svg>
<svg class="r" style="left:0;top:0" width="330" height="300"><polyline points="21.5,133.5 24.4,133.5 27.4,133.5 30.3,133.5 33.3,133.5 36.2,133.5 39.2,133.5 42.1,133.5 45.1,132.5 48.0,133.5 50.9,133.5 53.9,133.5 56.8,133.5 59.8,132.5 62.7,133.5 65.7,133.5 68.6,132.5 71.6,133.5 74.5,133.5 77.4,132.5 80.4,133.5 83.3,133.5 86.3,133.5 89.2,133.5 92.2,133.5 95.1,133.5 98.1,132.5 101.0,132.5 103.9,133.5 106.9,133.5 109.8,132.5 112.8,133.5 115.7,132.5 118.7,131.5 121.6,132.5 124.6,132.0 127.5,133.5 130.4,133.5 133.4,133.5 136.3,133.5 139.3,133.5 142.2,129.0 145.2,133.5 148.1,133.5 151.1,133.5 154.0,132.5 156.9,133.5 159.9,131.5 162.8,132.5 165.8,133.5 168.7,133.5 171.7,132.5 174.6,133.5 177.6,132.0 180.5,133.5 183.4,133.5 186.4,133.5 189.3,132.5 192.3,133.5 195.2,133.5 198.2,133.5 201.1,133.5 204.1,132.5 207.0,132.5 209.9,133.5 212.9,132.5 215.8,133.5 218.8,133.5 221.7,132.5 224.7,132.5 227.6,133.5 230.6,131.5 233.5,133.5 236.4,129.0 239.4,132.5 242.3,132.5 245.3,133.5 248.2,132.5 251.2,133.5 254.1,133.5 257.1,133.5 260.0,133.5 262.9,133.5 265.9,132.5 268.8,132.5 271.8,133.5 274.7,133.5 277.7,133.5 280.6,133.5 283.6,133.5 286.5,133.5 289.4,132.5 292.4,133.5 295.3,132.5 298.3,132.5 301.2,132.5 304.2,132.5 307.1,132.5 310.1,132.5 313.0,132.5" fill="none" stroke="#00ffff" stroke-width="1"/></svg>
<svg class="r" style="left:0;top:0" width="330" height="300"><polyline points="21.5,201.0 24.4,200.0 27.4,201.0 30.3,200.0 33.3,201.0 36.2,201.0 39.2,201.0 42.1,201.0 45.1,201.0 48.0,201.0 50.9,200.0 53.9,201.0 56.8,200.0 59.8,200.0 62.7,201.0 65.7,201.0 68.6,201.0 71.6,201.0 74.5,201.0 77.4,200.0 80.4,200.0 83.3,201.0 86.3,201.0 89.2,201.0 92.2,201.0 95.1,200.0 98.1,201.0 101.0,201.0 103.9,200.0 106.9,201.0 109.8,201.0 112.8,201.0 115.7,201.0 118.7,200.0 121.6,201.0 124.6,201.0 127.5,200.0 130.4,200.0 133.4,200.0 136.3,201.0 139.3,201.0 142.2,201.0 145.2,201.0 148.1,200.0 151.1,200.0 154.0,200.0 156.9,200.0 159.9,200.0 162.8,201.0 165.8,201.0 168.7,200.0 171.7,201.0 174.6,200.0 177.6,200.0 180.5,201.0 183.4,201.0 186.4,201.0 189.3,201.0 192.3,200.0 195.2,200.0 198.2,200.0 201.1,201.0 204.1,201.0 207.0,201.0 209.9,200.0 212.9,200.0 215.8,201.0 218.8,201.0 221.7,201.0 224.7,201.0 227.6,201.0 230.6,201.0 233.5,201.0 236.4,201.0 239.4,201.0 242.3,201.0 245.3,201.0 248.2,201.0 251.2,201.0 254.1,200.0 257.1,201.0 260.0,201.0 262.9,200.0 265.9,201.0 268.8,201.0 271.8,201.0 274.7,201.0 277.7,201.0 280.6,201.0 283.6,201.0 286.5,200.0 289.4,201.0 292.4,200.0 295.3,201.0 298.3,201.0 301.2,201.0 304.2,201.0 307.1,201.0 310.1,201.0 313.0,201.0" fill="none" stroke="#00ffff" stroke-width="1"/></svg>
<svg class="r" style="left:0;top:0" width="330" height="300"><polyline points="21.5,264.5 24.4,264.5 27.4,264.5 30.3,264.5 33.3,264.5 36.2,264.5 39.2,264.5 42.1,264.5 45.1,264.5 48.0,264.5 50.9,264.5 53.9,264.5 56.8,263.5 59.8,264.5 62.7,264.5 65.7,264.5 68.6,264.5 71.6,264.5 74.5,264.5 77.4,264.5 80.4,264.5 83.3,264.5 86.3,264.5 89.2,264.5 92.2,264.5 95.1,264.5 98.1,264.5 101.0,264.5 103.9,264.5 106.9,264.5 109.8,264.5 112.8,264.5 115.7,264.5 118.7,264.5 121.6,264.5 124.6,264.5 127.5,264.5 130.4,264.5 133.4,264.5 136.3,264.5 139.3,264.5 142.2,264.5 145.2,264.5 148.1,264.5 151.1,264.5 154.0,264.5 156.9,263.0 159.9,264.5 162.8,264.5 165.8,264.5 168.7,264.5 171.7,264.5 174.6,264.5 177.6,264.5 180.5,264.5 183.4,264.5 186.4,264.5 189.3,264.5 192.3,264.5 195.2,264.5 198.2,264.5 201.1,264.5 204.1,264.5 207.0,264.5 209.9,264.5 212.9,264.5 215.8,264.5 218.8,264.5 221.7,264.5 224.7,264.5 227.6,264.5 230.6,264.5 233.5,264.5 236.4,264.5 239.4,264.5 242.3,264.5 245.3,264.5 248.2,264.5 251.2,264.5 254.1,264.5 257.1,264.5 260.0,264.5 262.9,264.5 265.9,264.5 268.8,264.5 271.8,264.5 274.7,264.5 277.7,264.5 280.6,264.5 283.6,264.5 286.5,264.5 289.4,264.5 292.4,264.5 295.3,263.0 298.3,264.5 301.2,264.5 304.2,264.5 307.1,264.5 310.1,264.5 313.0,264.5" fill="none" stroke="#00ffff" stroke-width="1"/></svg>
<svg class="r" style="left:0;top:0" width="330" height="300"><polyline points="21.5,289.5 23.0,287.5 24.0,289.5 27.5,289.5 29.0,287.5 30.0,289.5 33.4,289.5 34.9,287.5 35.9,289.5 39.4,289.5 40.9,287.5 41.9,289.5 45.3,289.5 46.8,287.5 47.8,289.5 51.3,289.5 52.8,287.5 53.8,289.5 57.3,289.5 58.8,287.5 59.8,289.5 63.2,289.5 64.7,287.5 65.7,289.5 69.2,289.5 70.7,287.5 71.7,289.5 75.1,289.5 76.6,287.5 77.6,289.5 81.1,289.5 82.6,287.5 83.6,289.5 87.1,289.5 88.6,287.5 89.6,289.5 93.0,289.5 94.5,287.5 95.5,289.5 99.0,289.5 100.5,287.5 101.5,289.5 104.9,289.5 106.4,287.5 107.4,289.5 110.9,289.5 112.4,287.5 113.4,289.5 116.9,289.5 118.4,287.5 119.4,289.5 122.8,289.5 124.3,287.5 125.3,289.5 128.8,289.5 130.3,287.5 131.3,289.5 134.7,289.5 136.2,287.5 137.2,289.5 140.7,289.5 142.2,287.5 143.2,289.5 146.7,289.5 148.2,287.5 149.2,289.5 152.6,289.5 154.1,287.5 155.1,289.5 158.6,289.5 160.1,287.5 161.1,289.5 164.5,289.5 166.0,287.5 167.0,289.5 170.5,289.5 172.0,287.5 173.0,289.5 176.5,289.5 178.0,287.5 179.0,289.5 182.4,289.5 183.9,287.5 184.9,289.5 188.4,289.5 189.9,287.5 190.9,289.5 194.3,289.5 195.8,287.5 196.8,289.5 200.3,289.5 201.8,287.5 202.8,289.5 206.3,289.5 207.8,287.5 208.8,289.5 212.2,289.5 213.7,287.5 214.7,289.5 218.2,289.5 219.7,287.5 220.7,289.5 224.1,289.5 225.6,287.5 226.6,289.5 230.1,289.5 231.6,287.5 232.6,289.5 236.1,289.5 237.6,287.5 238.6,289.5 242.0,289.5 243.5,287.5 244.5,289.5 248.0,289.5 249.5,287.5 250.5,289.5 253.9,289.5 255.4,287.5 256.4,289.5 259.9,289.5 261.4,287.5 262.4,289.5 265.9,289.5 267.4,287.5 268.4,289.5 271.8,289.5 273.3,287.5 274.3,289.5 277.8,289.5 279.3,287.5 280.3,289.5 283.7,289.5 285.2,287.5 286.2,289.5 289.7,289.5 291.2,287.5 292.2,289.5 295.7,289.5 297.2,287.5 298.2,289.5 301.6,289.5 303.1,287.5 304.1,289.5 307.6,289.5 309.1,287.5 310.1,289.5 313,289.5" fill="none" stroke="#00ffff" stroke-width="1"/></svg>
<div class="r" style="left:17px;top:296px;width:19px;height:19px;background:rgba(104,173,173,0.245);border-radius:3px"></div>
<div class="r" style="left:20px;top:299px;width:13px;height:13px;background:#22d4d4;border-radius:2px"></div>
<div class="t" style="left:40px;top:301px">Lock 60</div>
<div class="r" style="left:1257px;top:21px;width:536px;height:19px;background:rgba(29,36,43,0.965);border-radius:4px 4px 0 0"></div>
<div class="r" style="left:1257px;top:40px;width:536px;height:650px;background:rgba(0,0,0,0.83);border-radius:0 0 4px 4px"></div>
<svg class="r" style="left:1263px;top:27px" width="9" height="8"><path d="M0 0H9L4.5 8Z" fill="#00ffff"/></svg>
<div class="t" style="left:1278px;top:27px">Debug</div>
<svg class="r" style="left:1273px;top:51px" width="7" height="8"><path d="M0 0L7 4.0L0 8Z" fill="#00ffff"/></svg>
<div class="t" style="left:1286px;top:51px">Debug Icosphere Verts</div>
<div class="r" style="left:1265px;top:65px;width:105px;height:19px;background:#2b3b3b;border-radius:3px"></div>
<div class="t" style="left:1300px;top:71px">R:166</div>
<div class="r" style="left:1374px;top:65px;width:105px;height:19px;background:#2b3b3b;border-radius:3px"></div>
<div class="t" style="left:1409px;top:71px">G:166</div>
<div class="r" style="left:1483px;top:65px;width:107px;height:19px;background:#2b3b3b;border-radius:3px"></div>
<div class="t" style="left:1519px;top:71px">B:166</div>
<div class="r" style="left:1594px;top:65px;width:19px;height:19px;background:#a6a6a6;border-radius:3px"></div>
<div class="t" style="left:1617px;top:71px">Background</div>
<svg class="r" style="left:1776px;top:673px" width="17" height="17"><path d="M17 0V17H0Z" fill="#0e9a9a"/></svg>
<div class="r" style="left:860px;top:387px;width:979px;height:19px;background:rgba(29,36,43,0.965);border-radius:4px 4px 0 0"></div>
<div class="r" style="left:860px;top:406px;width:979px;height:522px;background:rgba(0,0,0,0.83);border-radius:0 0 4px 4px"></div>
<svg class="r" style="left:866px;top:393px" width="9" height="8"><path d="M0 0H9L4.5 8Z" fill="#00ffff"/></svg>
<div class="t" style="left:882px;top:393px">Input Mapping Priority</div>
<div class="t" style="left:868px;top:417px">[type: Mouse X Axis, sys_id: 0, joy: 0, hat:0 ]</div>
<div class="t" style="left:1268px;top:417px">(combo type Mouse Button, sys_id: 3, joy: 0, hat:0) -&gt; cmd: Roll</div>
<div class="r" style="left:868px;top:431px;width:962px;height:1px;background:#0cb0b0"></div>
<div class="t" style="left:868px;top:438px">[type: Mouse Button, sys_id: 1, joy: 0, hat:0 ]</div>
<div class="t" style="left:1268px;top:438px">(combo type Mouse Button, sys_id: 3, joy: 0, hat:0) -&gt; cmd: Jump</div>
<div class="r" style="left:868px;top:452px;width:962px;height:1px;background:#0cb0b0"></div>
<div class="t" style="left:868px;top:459px">[type: Mouse X Axis, sys_id: 0, joy: 0, hat:0 ]</div>
<div class="t" style="left:1268px;top:459px">(combo type None, sys_id: 0, joy: 0, hat:0) -&gt; cmd: Yaw</div>
<div class="r" style="left:868px;top:473px;width:962px;height:1px;background:#0cb0b0"></div>
<div class="t" style="left:868px;top:480px">[type: Joy Axis, sys_id: 0, joy: 0, hat:0 ]</div>
<div class="t" style="left:1268px;top:480px">(combo type None, sys_id: 0, joy: 0, hat:0) -&gt; cmd: Yaw</div>
<div class="r" style="left:868px;top:494px;width:962px;height:1px;background:#0cb0b0"></div>
<div class="t" style="left:868px;top:501px">[type: Joy Axis, sys_id: 5, joy: 0, hat:0 ]</div>
<div class="t" style="left:1268px;top:501px">(combo type None, sys_id: 0, joy: 0, hat:0) -&gt; cmd: Fwd Throttle</div>
<div class="r" style="left:868px;top:515px;width:962px;height:1px;background:#0cb0b0"></div>
<div class="t" style="left:868px;top:522px">[type: Joy Axis, sys_id: 3, joy: 0, hat:0 ]</div>
<div class="t" style="left:1268px;top:522px">(combo type None, sys_id: 0, joy: 0, hat:0) -&gt; cmd: Roll</div>
<div class="r" style="left:868px;top:536px;width:962px;height:1px;background:#0cb0b0"></div>
<div class="t" style="left:868px;top:543px">[type: Joystick Button, sys_id: 0, joy: 0, hat:0 ]</div>
<div class="t" style="left:1268px;top:543px">(combo type None, sys_id: 0, joy: 0, hat:0) -&gt; cmd: Jump</div>
<div class="r" style="left:868px;top:557px;width:962px;height:1px;background:#0cb0b0"></div>
<div class="t" style="left:868px;top:564px">[type: Key, sys_id: 32, joy: 0, hat:0 ]</div>
<div class="t" style="left:1268px;top:564px">(combo type None, sys_id: 0, joy: 0, hat:0) -&gt; cmd: Jump</div>
<div class="r" style="left:868px;top:578px;width:962px;height:1px;background:#0cb0b0"></div>
<div class="t" style="left:868px;top:585px">[type: Mouse Y Axis, sys_id: 0, joy: 0, hat:0 ]</div>
<div class="t" style="left:1268px;top:585px">(combo type None, sys_id: 0, joy: 0, hat:0) -&gt; cmd: Pitch</div>
<div class="r" style="left:868px;top:599px;width:962px;height:1px;background:#0cb0b0"></div>
<div class="t" style="left:868px;top:606px">[type: Mouse Button, sys_id: 3, joy: 0, hat:0 ]</div>
<div class="t" style="left:1268px;top:606px">(combo type None, sys_id: 0, joy: 0, hat:0) -&gt; cmd: Jump</div>
<div class="r" style="left:868px;top:620px;width:962px;height:1px;background:#0cb0b0"></div>
<div class="t" style="left:868px;top:627px">[type: Joy Axis, sys_id: 4, joy: 0, hat:0 ]</div>
<div class="t" style="left:1268px;top:627px">(combo type None, sys_id: 0, joy: 0, hat:0) -&gt; cmd: Pitch</div>
<div class="r" style="left:868px;top:641px;width:962px;height:1px;background:#0cb0b0"></div>
<div class="t" style="left:868px;top:648px">[type: None, sys_id: 0, joy: 0, hat:0 ]</div>
<div class="t" style="left:1268px;top:648px">(combo type None, sys_id: 0, joy: 0, hat:0) -&gt; cmd:</div>
<div class="r" style="left:868px;top:662px;width:962px;height:1px;background:#0cb0b0"></div>
<div class="t" style="left:868px;top:669px">[type: None, sys_id: 0, joy: 0, hat:0 ]</div>
<div class="t" style="left:1268px;top:669px">(combo type None, sys_id: 0, joy: 0, hat:0) -&gt; cmd:</div>
<div class="r" style="left:868px;top:683px;width:962px;height:1px;background:#0cb0b0"></div>
<div class="t" style="left:868px;top:690px">[type: None, sys_id: 0, joy: 0, hat:0 ]</div>
<div class="t" style="left:1268px;top:690px">(combo type None, sys_id: 0, joy: 0, hat:0) -&gt; cmd:</div>
<div class="r" style="left:868px;top:704px;width:962px;height:1px;background:#0cb0b0"></div>
<div class="t" style="left:868px;top:711px">[type: None, sys_id: 0, joy: 0, hat:0 ]</div>
<div class="t" style="left:1268px;top:711px">(combo type None, sys_id: 0, joy: 0, hat:0) -&gt; cmd:</div>
<div class="r" style="left:868px;top:725px;width:962px;height:1px;background:#0cb0b0"></div>
<div class="t" style="left:868px;top:732px">[type: None, sys_id: 0, joy: 0, hat:0 ]</div>
<div class="t" style="left:1268px;top:732px">(combo type None, sys_id: 0, joy: 0, hat:0) -&gt; cmd:</div>
<div class="r" style="left:868px;top:746px;width:962px;height:1px;background:#0cb0b0"></div>
<div class="t" style="left:868px;top:753px">[type: None, sys_id: 0, joy: 0, hat:0 ]</div>
<div class="t" style="left:1268px;top:753px">(combo type None, sys_id: 0, joy: 0, hat:0) -&gt; cmd:</div>
<div class="r" style="left:868px;top:767px;width:962px;height:1px;background:#0cb0b0"></div>
<div class="t" style="left:868px;top:774px">[type: None, sys_id: 0, joy: 0, hat:0 ]</div>
<div class="t" style="left:1268px;top:774px">(combo type None, sys_id: 0, joy: 0, hat:0) -&gt; cmd:</div>
<div class="r" style="left:868px;top:788px;width:962px;height:1px;background:#0cb0b0"></div>
<div class="t" style="left:868px;top:795px">[type: None, sys_id: 0, joy: 0, hat:0 ]</div>
<div class="t" style="left:1268px;top:795px">(combo type None, sys_id: 0, joy: 0, hat:0) -&gt; cmd:</div>
<div class="r" style="left:868px;top:809px;width:962px;height:1px;background:#0cb0b0"></div>
<div class="t" style="left:868px;top:816px">[type: None, sys_id: 0, joy: 0, hat:0 ]</div>
<div class="t" style="left:1268px;top:816px">(combo type None, sys_id: 0, joy: 0, hat:0) -&gt; cmd:</div>
<div class="r" style="left:868px;top:830px;width:962px;height:1px;background:#0cb0b0"></div>
<div class="r" style="left:864px;top:884px;width:970px;height:1px;background:#0cb0b0"></div>
<svg class="r" style="left:1822px;top:911px" width="17" height="17"><path d="M17 0V17H0Z" fill="#0e9a9a"/></svg>
<div class="r" style="left:62px;top:346px;width:784px;height:19px;background:rgba(14,82,82,0.96);border-radius:4px 4px 0 0"></div>
<div class="r" style="left:62px;top:365px;width:784px;height:597px;background:rgba(0,0,0,0.83);border-radius:0 0 4px 4px"></div>
<svg class="r" style="left:68px;top:352px" width="9" height="8"><path d="M0 0H9L4.5 8Z" fill="#00ffff"/></svg>
<div class="t" style="left:84px;top:352px">Input Mapping</div>
<svg class="r" style="left:828px;top:347px" width="17" height="17"><circle cx="8.5" cy="8.5" r="7.3" fill="#0e7e7e"/></svg>
<div class="r" style="left:822px;top:373px;width:16px;height:541px;background:#2b3b3b;border-radius:3px"></div>
<div class="r" style="left:825px;top:376px;width:10px;height:512px;background:#1a9696;border-radius:5px"></div>
<svg class="r" style="left:829px;top:945px" width="17" height="17"><path d="M17 0V17H0Z" fill="#0e9a9a"/></svg>
<div class="r" style="left:0;top:365px;width:846px;height:550px;overflow:hidden">
<div class="r" style="left:70px;top:117px;width:751px;height:1px;background:#0cb0b0"></div>
<div class="r" style="left:70px;top:230px;width:751px;height:1px;background:#0cb0b0"></div>
<div class="r" style="left:70px;top:343px;width:751px;height:1px;background:#0cb0b0"></div>
<div class="r" style="left:70px;top:456px;width:751px;height:1px;background:#0cb0b0"></div>
<div class="t" style="left:70px;top:11px">Jump</div>
<div class="t" style="left:70px;top:123px">Pitch</div>
<div class="t" style="left:70px;top:236px">Yaw</div>
<div class="t" style="left:70px;top:349px">Roll</div>
<div class="t" style="left:70px;top:462px">Fwd Throttle</div>
<div class="r" style="left:70px;top:25px;width:150px;height:19px;background:#125a5a;border-radius:3px"></div>
<div class="t" style="left:135px;top:31px">Key</div>
<div class="r" style="left:228px;top:25px;width:49px;height:19px;background:#125a5a;border-radius:3px"></div>
<div class="t" style="left:232px;top:31px">Listen</div>
<div class="t" style="left:320px;top:31px">[Space]</div>
<div class="r" style="left:70px;top:48px;width:150px;height:19px;background:#125a5a;border-radius:3px"></div>
<div class="t" style="left:93px;top:54px">Joystick Button</div>
<div class="r" style="left:228px;top:48px;width:49px;height:19px;background:#125a5a;border-radius:3px"></div>
<div class="t" style="left:232px;top:54px">Listen</div>
<div class="t" style="left:320px;top:54px">[Joy 0, Button 0]</div>
<div class="r" style="left:70px;top:71px;width:150px;height:19px;background:#125a5a;border-radius:3px"></div>
<div class="t" style="left:103px;top:77px">Mouse Button</div>
<div class="r" style="left:228px;top:71px;width:49px;height:19px;background:#125a5a;border-radius:3px"></div>
<div class="t" style="left:232px;top:77px">Listen</div>
<div class="t" style="left:320px;top:77px">[Mouse Button 1] ( hold [Mouse Button 3] )</div>
<div class="r" style="left:70px;top:94px;width:150px;height:19px;background:#125a5a;border-radius:3px"></div>
<div class="t" style="left:103px;top:100px">Mouse Button</div>
<div class="r" style="left:228px;top:94px;width:49px;height:19px;background:#125a5a;border-radius:3px"></div>
<div class="t" style="left:232px;top:100px">Listen</div>
<div class="t" style="left:320px;top:100px">[Mouse Button 3]</div>
<div class="r" style="left:70px;top:138px;width:150px;height:19px;background:#125a5a;border-radius:3px"></div>
<div class="t" style="left:117px;top:144px">Joy Axis</div>
<div class="r" style="left:228px;top:138px;width:49px;height:19px;background:#125a5a;border-radius:3px"></div>
<div class="t" style="left:232px;top:144px">Config</div>
<div class="r" style="left:320px;top:138px;width:150px;height:19px;background:#2b3b3b;border-radius:3px"></div>
<div class="r" style="left:320px;top:138px;width:75px;height:19px;background:#00ffff;border-radius:3px"></div>
<div class="r" style="left:478px;top:138px;width:42px;height:19px;background:#125a5a;border-radius:3px"></div>
<div class="t" style="left:482px;top:144px">Combo</div>
<div class="r" style="left:70px;top:161px;width:150px;height:19px;background:#125a5a;border-radius:3px"></div>
<div class="t" style="left:103px;top:167px">Mouse Y Axis</div>
<div class="r" style="left:228px;top:161px;width:49px;height:19px;background:#125a5a;border-radius:3px"></div>
<div class="t" style="left:232px;top:167px">Config</div>
<div class="r" style="left:320px;top:161px;width:150px;height:19px;background:#2b3b3b;border-radius:3px"></div>
<div class="r" style="left:320px;top:161px;width:95px;height:19px;background:#00ffff;border-radius:3px"></div>
<div class="r" style="left:478px;top:161px;width:42px;height:19px;background:#125a5a;border-radius:3px"></div>
<div class="t" style="left:482px;top:167px">Combo</div>
<div class="r" style="left:70px;top:184px;width:150px;height:19px;background:#125a5a;border-radius:3px"></div>
<div class="t" style="left:131px;top:190px">None</div>
<div class="r" style="left:70px;top:207px;width:150px;height:19px;background:#125a5a;border-radius:3px"></div>
<div class="t" style="left:131px;top:213px">None</div>
<div class="r" style="left:70px;top:251px;width:150px;height:19px;background:#125a5a;border-radius:3px"></div>
<div class="t" style="left:117px;top:257px">Joy Axis</div>
<div class="r" style="left:228px;top:251px;width:49px;height:19px;background:#125a5a;border-radius:3px"></div>
<div class="t" style="left:232px;top:257px">Config</div>
<div class="r" style="left:320px;top:251px;width:150px;height:19px;background:#2b3b3b;border-radius:3px"></div>
<div class="r" style="left:320px;top:251px;width:60px;height:19px;background:#00ffff;border-radius:3px"></div>
<div class="r" style="left:478px;top:251px;width:42px;height:19px;background:#125a5a;border-radius:3px"></div>
<div class="t" style="left:482px;top:257px">Combo</div>
<div class="r" style="left:70px;top:274px;width:150px;height:19px;background:#125a5a;border-radius:3px"></div>
<div class="t" style="left:103px;top:280px">Mouse X Axis</div>
<div class="r" style="left:228px;top:274px;width:49px;height:19px;background:#125a5a;border-radius:3px"></div>
<div class="t" style="left:232px;top:280px">Config</div>
<div class="r" style="left:320px;top:274px;width:150px;height:19px;background:#2b3b3b;border-radius:3px"></div>
<div class="r" style="left:320px;top:274px;width:60px;height:19px;background:#00ffff;border-radius:3px"></div>
<div class="r" style="left:478px;top:274px;width:42px;height:19px;background:#125a5a;border-radius:3px"></div>
<div class="t" style="left:482px;top:280px">Combo</div>
<div class="r" style="left:70px;top:297px;width:150px;height:19px;background:#125a5a;border-radius:3px"></div>
<div class="t" style="left:131px;top:303px">None</div>
<div class="r" style="left:70px;top:320px;width:150px;height:19px;background:#125a5a;border-radius:3px"></div>
<div class="t" style="left:131px;top:326px">None</div>
<div class="r" style="left:70px;top:364px;width:150px;height:19px;background:#125a5a;border-radius:3px"></div>
<div class="t" style="left:117px;top:370px">Joy Axis</div>
<div class="r" style="left:228px;top:364px;width:49px;height:19px;background:#125a5a;border-radius:3px"></div>
<div class="t" style="left:232px;top:370px">Config</div>
<div class="r" style="left:320px;top:364px;width:150px;height:19px;background:#2b3b3b;border-radius:3px"></div>
<div class="r" style="left:320px;top:364px;width:60px;height:19px;background:#00ffff;border-radius:3px"></div>
<div class="r" style="left:478px;top:364px;width:42px;height:19px;background:#125a5a;border-radius:3px"></div>
<div class="t" style="left:482px;top:370px">Combo</div>
<div class="r" style="left:70px;top:387px;width:150px;height:19px;background:#125a5a;border-radius:3px"></div>
<div class="t" style="left:103px;top:393px">Mouse X Axis</div>
<div class="r" style="left:228px;top:387px;width:49px;height:19px;background:#125a5a;border-radius:3px"></div>
<div class="t" style="left:232px;top:393px">Config</div>
<div class="r" style="left:320px;top:387px;width:150px;height:19px;background:#2b3b3b;border-radius:3px"></div>
<div class="r" style="left:320px;top:387px;width:28px;height:19px;background:#00ffff;border-radius:3px"></div>
<div class="r" style="left:478px;top:387px;width:42px;height:19px;background:#125a5a;border-radius:3px"></div>
<div class="t" style="left:482px;top:393px">Combo</div>
<div class="t" style="left:528px;top:393px">( hold [Mouse Button 3] )</div>
<div class="r" style="left:70px;top:410px;width:150px;height:19px;background:#125a5a;border-radius:3px"></div>
<div class="t" style="left:131px;top:416px">None</div>
<div class="r" style="left:70px;top:433px;width:150px;height:19px;background:#125a5a;border-radius:3px"></div>
<div class="t" style="left:131px;top:439px">None</div>
<div class="r" style="left:70px;top:477px;width:150px;height:19px;background:#125a5a;border-radius:3px"></div>
<div class="t" style="left:117px;top:483px">Joy Axis</div>
<div class="r" style="left:228px;top:477px;width:49px;height:19px;background:#125a5a;border-radius:3px"></div>
<div class="t" style="left:232px;top:483px">Config</div>
<div class="r" style="left:320px;top:477px;width:150px;height:19px;background:#2b3b3b;border-radius:3px"></div>
<div class="r" style="left:319px;top:477px;width:2px;height:19px;background:#00ffff"></div>
<div class="r" style="left:478px;top:477px;width:42px;height:19px;background:#125a5a;border-radius:3px"></div>
<div class="t" style="left:482px;top:483px">Combo</div>
<div class="r" style="left:70px;top:500px;width:150px;height:19px;background:#125a5a;border-radius:3px"></div>
<div class="t" style="left:131px;top:506px">None</div>
<div class="r" style="left:70px;top:523px;width:150px;height:19px;background:#125a5a;border-radius:3px"></div>
<div class="t" style="left:131px;top:529px">None</div>
<div class="r" style="left:70px;top:546px;width:150px;height:19px;background:#125a5a;border-radius:3px"></div>
<div class="t" style="left:131px;top:552px">None</div>
</div>
<div class="r" style="left:66px;top:918px;width:775px;height:1px;background:#0cb0b0"></div>
<div class="r" style="left:70px;top:922px;width:35px;height:19px;background:#125a5a;border-radius:3px"></div>
<div class="t" style="left:74px;top:928px">Save</div>
<div class="r" style="left:137px;top:509px;width:129px;height:101px;background:#000;border-radius:2px;box-shadow:inset 0 0 0 1px #0cbaba"></div>
<div class="t" style="left:145px;top:520px">Type:</div>
<div class="r" style="left:141px;top:534px;width:120px;height:1px;background:#0cb0b0"></div>
<div class="t" style="left:145px;top:541px">None</div>
<div class="r" style="left:141px;top:553px;width:121px;height:17px;background:#0a4a4a"></div>
<div class="t" style="left:145px;top:558px">Joystick Axis</div>
<svg class="r" style="left:249px;top:557px" width="9" height="9"><path d="M0 0L9 4.5L0 9Z" fill="#00ffff"/></svg>
<div class="t" style="left:145px;top:575px">Mouse X Axis</div>
<div class="t" style="left:145px;top:592px">Mouse Y Axis</div>
<div class="r" style="left:258px;top:547px;width:281px;height:205px;background:#000;border-radius:2px;box-shadow:inset 0 0 0 1px #0cbaba"></div>
<div class="t" style="left:266px;top:558px">Axes:</div>
<div class="r" style="left:262px;top:572px;width:272px;height:1px;background:#0cb0b0"></div>
<div class="t" style="left:266px;top:579px">XInput Controller #1</div>
<div class="t" style="left:266px;top:596px;color:#007878">GUID: 78696e70757401000000000000000000</div>
<div class="r" style="left:266px;top:610px;width:19px;height:19px;background:#142626;border-radius:3px"></div>
<div class="t" style="left:293px;top:616px">Axis 0</div>
<div class="r" style="left:357px;top:610px;width:173px;height:19px;background:#142626;border-radius:3px"></div>
<div class="r" style="left:357px;top:610px;width:86px;height:19px;background:#00ffff;border-radius:3px"></div>
<div class="r" style="left:266px;top:633px;width:19px;height:19px;background:#142626;border-radius:3px"></div>
<div class="t" style="left:293px;top:639px">Axis 1</div>
<div class="r" style="left:357px;top:633px;width:173px;height:19px;background:#142626;border-radius:3px"></div>
<div class="r" style="left:357px;top:633px;width:70px;height:19px;background:#00ffff;border-radius:3px"></div>
<div class="r" style="left:266px;top:656px;width:19px;height:19px;background:#142626;border-radius:3px"></div>
<div class="t" style="left:293px;top:662px">Axis 2</div>
<div class="r" style="left:357px;top:656px;width:173px;height:19px;background:#142626;border-radius:3px"></div>
<div class="r" style="left:356px;top:656px;width:2px;height:19px;background:#00ffff"></div>
<div class="r" style="left:266px;top:679px;width:19px;height:19px;background:#142626;border-radius:3px"></div>
<div class="t" style="left:293px;top:685px">Axis 3</div>
<div class="r" style="left:357px;top:679px;width:173px;height:19px;background:#142626;border-radius:3px"></div>
<div class="r" style="left:357px;top:679px;width:86px;height:19px;background:#00ffff;border-radius:3px"></div>
<div class="r" style="left:266px;top:702px;width:19px;height:19px;background:#142626;border-radius:3px"></div>
<div class="r" style="left:269px;top:705px;width:13px;height:13px;background:#0fb5b5;border-radius:2px"></div>
<div class="t" style="left:293px;top:708px">Axis 4</div>
<div class="r" style="left:357px;top:702px;width:173px;height:19px;background:#142626;border-radius:3px"></div>
<div class="r" style="left:357px;top:702px;width:86px;height:19px;background:#00ffff;border-radius:3px"></div>
<div class="r" style="left:266px;top:725px;width:19px;height:19px;background:#142626;border-radius:3px"></div>
<div class="t" style="left:293px;top:731px">Axis 5</div>
<div class="r" style="left:357px;top:725px;width:173px;height:19px;background:#142626;border-radius:3px"></div>
<div class="r" style="left:356px;top:725px;width:2px;height:19px;background:#00ffff"></div>
<div class="r" style="left:4px;top:996px;width:550px;height:19px;background:#4b4b4b;border-radius:4px"></div>
<svg class="r" style="left:11px;top:1000px" width="9" height="11"><path d="M0 0L9 5.5L0 11Z" fill="#00ffff"/></svg>
<div class="t" style="left:26px;top:1002px">ImGui Demo</div>
<svg class="r" style="left:537px;top:998px" width="15" height="15"><circle cx="7.5" cy="7.5" r="7.5" fill="#307a7a"/></svg>
</body></html>
